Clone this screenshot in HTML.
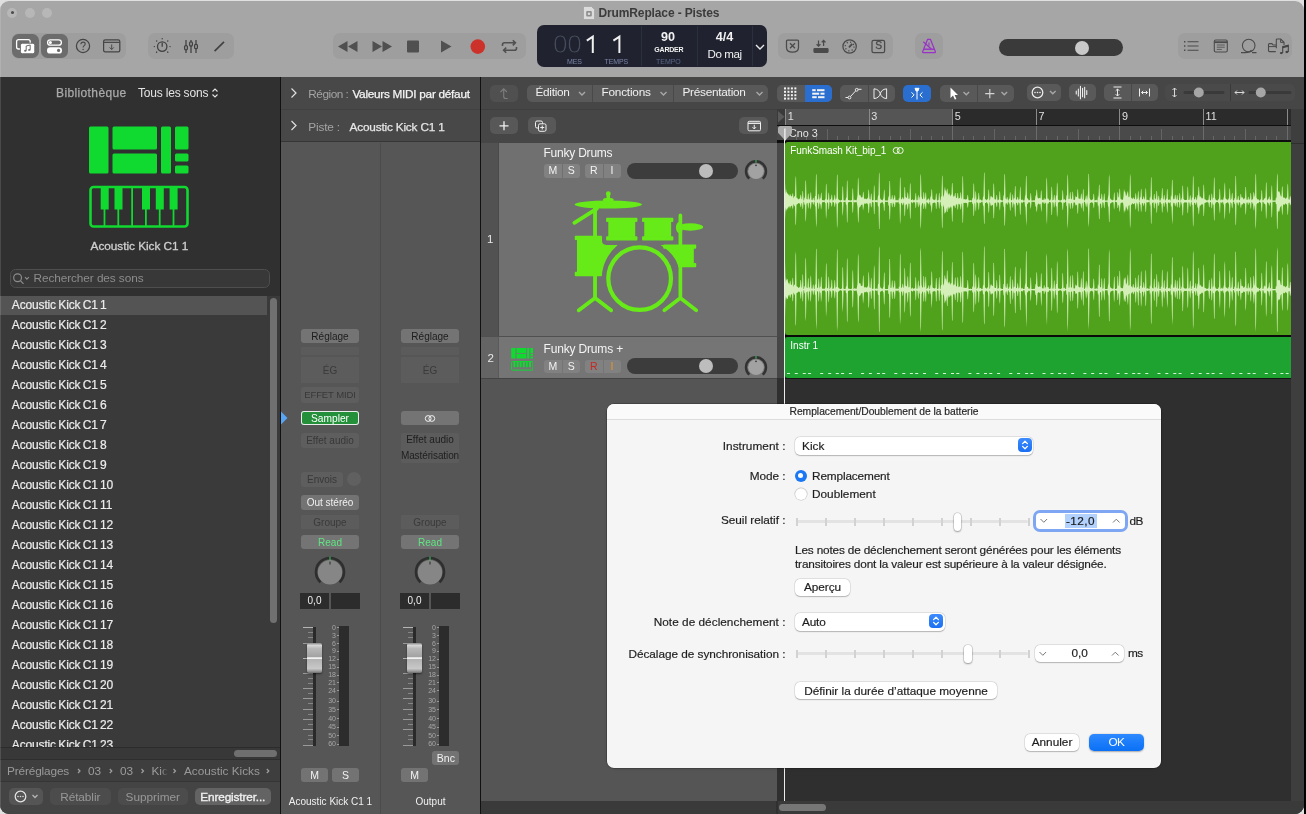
<!DOCTYPE html>
<html><head><meta charset="utf-8">
<style>
*{box-sizing:border-box;margin:0;padding:0}
html,body{width:1306px;height:814px;overflow:hidden;background:#e0e0e0;font-family:"Liberation Sans",sans-serif;font-size:12px;color:#e6e6e6}
.a{position:absolute}
.t{position:absolute;white-space:nowrap;line-height:1}
/* top bar */
#top{left:0;top:0;width:1306px;height:77px;background:#a6a6a6}
.grp{position:absolute;top:33px;height:26px;border-radius:7px;background:#9e9e9e}
.act{position:absolute;top:.9px;height:24.200px;border-radius:6.500px;background:#6c6c6c}
/* library */
#lib{left:0;top:77px;width:280px;height:737px;background:#303030}
#list{left:0;top:219px;width:280px;height:451.700px;background:#3a3a3a;overflow:hidden}
.row{position:absolute;left:0;width:267px;height:19px;padding-left:11.800px;line-height:18.400px;font-size:12px;letter-spacing:-.15px;word-spacing:-.85px;-webkit-text-stroke:.2px #ececec;color:#ececec;white-space:nowrap}
/* inspector */
#insp{left:281px;top:77px;width:199px;height:737px;background:#565656}
.ib{position:absolute;height:15px;border-radius:3px;font-size:10px;text-align:center;line-height:15px;white-space:nowrap}
/* tracks */
#trk{left:481px;top:77px;width:825px;height:737px;background:#2c2c2c}
.tb{position:absolute;top:8.300px;height:17.200px;border-radius:5px;background:#595959}
/* dialog */
#dlg{left:607px;top:404px;width:554px;height:364px;background:#f5f5f5;border-radius:7px;font-size:12.4px;box-shadow:0 0 0 .5px rgba(0,0,0,.35),0 1px 3px rgba(0,0,0,.12)}
#dlg .t{margin-top:1px}
#dlg{-webkit-text-stroke:.18px #1e1e1e;color:#1e1e1e}
</style></head>
<body>
<div class="a" style="left:0;top:1.4px;width:1303.8px;height:812.6px;border-radius:9px;overflow:hidden;will-change:transform"><div class="a" style="left:0;top:-1.4px;width:1306px;height:814px">
<div id="top" class="a">

<!-- traffic lights -->
<div class="a" style="left:7px;top:8px;width:10px;height:10px;border-radius:5px;background:#b7b7b7"></div>
<div class="a" style="left:10.5px;top:11.5px;width:3px;height:3px;border-radius:2px;background:#4c4c4c"></div>
<div class="a" style="left:24.5px;top:8px;width:10px;height:10px;border-radius:5px;background:#b7b7b7"></div>
<div class="a" style="left:42px;top:8px;width:10px;height:10px;border-radius:5px;background:#b7b7b7"></div>
<!-- title -->
<svg class="a" style="left:583px;top:6px" width="12" height="14" viewBox="0 0 12 14"><path d="M0.5 0.5h8l3 3v10h-11z" fill="#dcdcdc" stroke="#9a9a9a" stroke-width=".6"/><rect x="3.2" y="5" width="5.6" height="5.4" rx="1" fill="#8e8e8e"/><circle cx="6" cy="7.7" r="1.3" fill="#dcdcdc"/></svg>
<div class="t" style="left:598.5px;top:7.3px;font-weight:bold;color:#3b3b3b;font-size:12px;letter-spacing:-0.129px">DrumReplace - Pistes</div>
<!-- group1 -->
<div class="grp" style="left:11.5px;width:114.5px">
 <div class="act" style="left:.6px;width:27.2px"></div>
 <div class="act" style="left:29.5px;width:27px"></div>
</div>
<svg class="a" style="left:11px;top:33px" width="116" height="26" viewBox="0 0 116 26" fill="none">
 <!-- media browser -->
 <rect x="5.6" y="6.6" width="13.6" height="9.4" rx="2" stroke="#fff" stroke-width="1.3"/>
 <rect x="9.4" y="10.2" width="14.4" height="10.6" rx="2" fill="#fff" stroke="#6c6c6c" stroke-width="1"/>
 <path d="M15.2 17.6V13l4-1v4.8" stroke="#6c6c6c" stroke-width="1"/><ellipse cx="14.3" cy="17.7" rx="1.2" ry=".95" fill="#6c6c6c"/><ellipse cx="18.3" cy="16.9" rx="1.2" ry=".95" fill="#6c6c6c"/>
 <!-- toggles -->
 <rect x="36.6" y="6.8" width="13.8" height="5.4" rx="2.7" stroke="#fff" stroke-width="1.3"/><circle cx="39.4" cy="9.5" r="1.5" fill="#fff"/>
 <rect x="36" y="14.2" width="15" height="6.4" rx="3.2" fill="#fff"/><circle cx="47.6" cy="17.4" r="1.6" fill="#6c6c6c"/>
 <!-- help -->
 <circle cx="72" cy="13" r="6.6" stroke="#444" stroke-width="1.25"/>
 <path d="M69.9 11.2c0-1.3 1-2.1 2.2-2.1s2.1.8 2.1 1.9c0 1.7-2.1 1.6-2.1 3.4" stroke="#4a4a4a" stroke-width="1.1"/><circle cx="72.1" cy="16.4" r=".75" fill="#4a4a4a"/>
 <!-- window download -->
 <rect x="92.6" y="6.8" width="16.2" height="12" rx="1.6" stroke="#444" stroke-width="1.25"/><path d="M92.6 9.4h16.2" stroke="#4a4a4a" stroke-width="1.2"/>
 <path d="M100.7 11.4v5M98.6 14.4l2.1 2.1 2.1-2.1" stroke="#4a4a4a" stroke-width="1"/>
</svg>
<!-- group2 -->
<div class="grp" style="left:148px;width:86px"></div>
<svg class="a" style="left:148px;top:33px" width="86" height="26" viewBox="0 0 86 26" fill="none" stroke="#424242" stroke-width="1.300">
 <circle cx="14.2" cy="13.6" r="4.7"/><path d="M14.2 9.8v4"/>
 <g stroke-width="1.4" stroke-linecap="round"><path d="M14.2 5.6v.1M8.6 8l.1.1M19.8 8l-.1.1M6.3 13.6h.1M22.1 13.6h-.1M8.6 19.2l.1-.1M19.8 19.2l-.1-.1"/></g>
 <path d="M38 7v13M43 7v13M48 7v13"/>
 <g fill="#a0a0a0"><rect x="36.6" y="12.6" width="2.8" height="4.2" rx="1.2"/><rect x="41.6" y="8.8" width="2.8" height="4.2" rx="1.2"/><rect x="46.6" y="11.4" width="2.8" height="4.2" rx="1.2"/></g>
 <path d="M66.6 18.2l9.4-9.4" stroke-width="1.7"/>
</svg>
<!-- transport -->
<div class="grp" style="left:332.5px;width:193.5px"></div>
<svg class="a" style="left:332px;top:33px" width="194" height="26" viewBox="0 0 194 26" fill="#505050">
 <path d="M15.5 8v11l-9.5-5.5zM25.500 8v11l-9.5-5.500z"/>
 <path d="M40.5 8v11l9.500-5.500zM50.500 8v11l9.500-5.500z"/>
 <rect x="75" y="7.6" width="12" height="12" rx="1"/>
 <path d="M109 7.600v12l10.500-6z"/>
 <circle cx="145.800" cy="13.600" r="7.300" fill="#cc3229"/>
 <g fill="none" stroke="#505050" stroke-width="1.600"><path d="M170.5 13v-1.200a2 2 0 0 1 2-2h10.500M180.800 7.200l2.600 2.600-2.600 2.600"/><path d="M184.500 14v1.200a2 2 0 0 1-2 2h-10.500M174.200 19.800l-2.600-2.600 2.600-2.600"/></g>
</svg>
<!-- LCD -->
<div class="a" style="left:537px;top:25px;width:230px;height:42px;border-radius:7px;background:#20232f"></div>
<div class="a" style="left:641px;top:26px;width:1px;height:40px;background:#2c303e"></div>
<div class="a" style="left:696.5px;top:26px;width:1px;height:40px;background:#2c303e"></div>
<div class="a" style="left:752px;top:26px;width:1px;height:40px;background:#2c303e"></div>
<div class="t" id="lcd00" style="left:552.5px;top:32.500px;font-size:25.5px;color:#474c5e;letter-spacing:-.3px;transform:scaleX(1.03);transform-origin:left;-webkit-text-stroke:.9px #20232f">00</div>
<svg class="a" style="left:584px;top:33px" width="40" height="22" viewBox="0 0 40 22" fill="none" stroke="#f0f0f0" stroke-width="2" stroke-linejoin="miter"><path d="M2.800 7.600L8.800 3.700V20M29.400 7.600L35.400 3.700V20"/></svg>
<div class="t" style="left:567px;top:58.200px;color:#7a84a6;font-size:7px;letter-spacing:-0.156px">MES</div>
<div class="t" style="left:604.500px;top:58.200px;color:#7a84a6;font-size:7px;letter-spacing:-0.083px">TEMPS</div>
<div class="t" style="left:661px;top:31.500px;font-size:12.6px;font-weight:bold;color:#f2f2f2">90</div>
<div class="t" style="left:654.300px;top:46.800px;font-weight:bold;color:#f2f2f2;font-size:7px;letter-spacing:-0.206px">GARDER</div>
<div class="t" style="left:656px;top:58.200px;color:#5a6688;font-size:7px;letter-spacing:-0.018px">TEMPO</div>
<div class="t" style="left:715.700px;top:31.500px;font-size:12.6px;font-weight:bold;color:#f2f2f2">4/4</div>
<div class="t" style="left:707.600px;top:48.800px;color:#f2f2f2;font-size:11.6px;letter-spacing:-0.440px">Do maj</div>
<svg class="a" style="left:754px;top:42px" width="12" height="10" viewBox="0 0 12 10"><path d="M2 3l4 4 4-4" fill="none" stroke="#e8e8e8" stroke-width="1.4"/></svg>
<!-- group4 -->
<div class="grp" style="left:777.5px;width:115.5px"></div>
<svg class="a" style="left:777px;top:33px" width="117" height="26" viewBox="0 0 117 26" fill="none" stroke="#4a4a4a" stroke-width="1.250">
 <path d="M10.500 7h10a1 1 0 0 1 1 1v6.500c0 3-2.500 4.700-6 4.700s-6-1.700-6-4.700v-6.500a1 1 0 0 1 1-1z"/><path d="M13 10.200l5 5M18 10.200l-5 5"/>
 <rect x="37" y="15.600" width="14" height="3.800" rx=".8" fill="#4a4a4a"/><path d="M41.500 7.500v5.600M39.600 11.300l1.900 1.900 1.900-1.900M46.600 13.100v-5.600M44.700 9.400l1.900-1.900 1.900 1.900"/>
 <circle cx="72.600" cy="13.500" r="6.700"/><circle cx="72.600" cy="13.500" r="4.400" stroke-dasharray="1.2 2.250"/><path d="M72 14.400l3.200-3.600" stroke-width="1.8"/>
 <rect x="95" y="7.300" width="12.600" height="12.200" rx="1.600"/>
</svg>
<div class="t" style="left:875.300px;top:41.300px;font-size:10.3px;-webkit-text-stroke:.3px #4a4a4a;color:#4a4a4a">S</div>
<!-- group5 metronome -->
<div class="grp" style="left:914.5px;width:28.5px"></div>
<svg class="a" style="left:914px;top:33px" width="30" height="26" viewBox="0 0 30 26" fill="none" stroke="#9a32c8" stroke-width="1.2" stroke-linejoin="round">
 <path d="M13.600 6.300h2.800l5 12.500a.6.600 0 0 1-.6.800h-11.600a.6.600 0 0 1-.6-.8z"/><path d="M10 16.200h10" stroke-width="1.400"/><path d="M9.300 8.800l8 7.200"/><path d="M15 9.500v3.300" stroke-width="1.100"/>
</svg>
<!-- volume -->
<div class="a" style="left:998.5px;top:39.500px;width:124px;height:16.500px;border-radius:8.500px;background:#3a3a3a"></div>
<div class="a" style="left:1075px;top:41px;width:14px;height:14px;border-radius:7px;background:#c9c9c9"></div>
<!-- group6 -->
<div class="grp" style="left:1177.5px;width:114.5px"></div>
<svg class="a" style="left:1177px;top:33px" width="116" height="26" viewBox="0 0 116 26" fill="none" stroke="#4a4a4a" stroke-width="1.1">
 <path d="M10.500 8.800h11M10.500 13h11M10.500 17.200h11"/><g stroke-width="1.6"><path d="M7 8.800h1.400M7 13h1.400M7 17.200h1.400"/></g>
 <rect x="37.300" y="7" width="13" height="12" rx="1.500"/><path d="M37.300 9.200h13" stroke-width="1.800"/><path d="M39.800 12h8M39.800 14.200h8M39.800 16.400h5" stroke-width=".8"/>
 <circle cx="71.700" cy="12.600" r="6.300"/><path d="M64 19.600h4.500c3 0 5-1 6-2.500M75 19.600h4.500"/>
 <path d="M98.800 18.600h-6.300a1 1 0 0 1-1-1v-6a1 1 0 0 1 1-1h2.400l1.200 1.400h3" stroke-width="1.100"/><path d="M91.500 13.600h7.500" stroke-width="1"/>
<path d="M99.300 15.300v-8.500a.8.800 0 0 1 .8-.8h3.600l3.300 3.300v3" stroke-width="1.100"/><path d="M103.600 6.200v3.200h3.200" stroke-width="1"/>
<g stroke="#9e9e9e" stroke-width="2.600" fill="#9e9e9e"><path d="M105.700 20v-6.300l5.600-1.400v6.600" fill="none"/><ellipse cx="104.200" cy="20.100" rx="1.700" ry="1.300"/><ellipse cx="109.800" cy="19" rx="1.700" ry="1.300"/></g>
<g stroke="#444" fill="#444"><path d="M105.700 20v-6.300l5.600-1.400v6.600" fill="none" stroke-width="1.100"/><path d="M105.700 14.300l5.600-1.400" stroke-width="1.900"/><ellipse cx="104.300" cy="20.100" rx="1.500" ry="1.150" stroke="none"/><ellipse cx="109.900" cy="19" rx="1.500" ry="1.150" stroke="none"/></g>
</svg>
</div>

<div id="lib" class="a">
<div class="t" style="left:56px;top:10px;color:#a9a9a9;-webkit-text-stroke:.25px #a9a9a9;font-size:12px;letter-spacing:0.379px">Bibliothèque</div>
<div class="t" style="left:138px;top:10px;color:#e4e4e4;font-size:12px;letter-spacing:-0.193px">Tous les sons</div>
<svg class="a" style="left:211px;top:10px" width="8" height="12" viewBox="0 0 8 12"><path d="M1.5 4.500l2.500-2.500 2.500 2.500M1.500 7.500l2.500 2.500 2.500-2.500" fill="none" stroke="#e4e4e4" stroke-width="1.1"/></svg>
<!-- drum machine icon -->
<svg class="a" style="left:88px;top:49px" width="102" height="104" viewBox="0 0 102 104">
 <g fill="#10d930"><rect x="1" y="0.500" width="19.500" height="47" rx="1.500"/><rect x="24.500" y="0.500" width="44.500" height="23" rx="1.500"/><rect x="24.500" y="27.500" width="44.500" height="20" rx="1.500"/><rect x="73" y="0.500" width="10" height="47" rx="1.500"/><rect x="87" y="0.500" width="13.500" height="23" rx="1.500"/><rect x="87" y="27.500" width="13.500" height="8" rx="1.500"/><rect x="87" y="39.500" width="13.500" height="8" rx="1.500"/></g>
 <rect x="2.500" y="61" width="97" height="39.500" rx="3" fill="none" stroke="#10d930" stroke-width="2.600"/>
 <g stroke="#10d930" stroke-width="1.800"><path d="M16.500 61v39M30.300 61v39M44.100 61v39M57.900 61v39M71.700 61v39M85.500 61v39"/></g>
 <g fill="#10d930"><rect x="12.700" y="61" width="8" height="22.500"/><rect x="26.500" y="61" width="8" height="22.500"/><rect x="54" y="61" width="8" height="22.500"/><rect x="67.800" y="61" width="8" height="22.500"/><rect x="81.600" y="61" width="8" height="22.500"/></g>
</svg>
<div class="t" style="left:0;width:279px;text-align:center;top:164px;color:#cfcfcf;-webkit-text-stroke:.3px #cfcfcf;font-size:11.8px;letter-spacing:-0.032px">Acoustic Kick C1 1</div>
<!-- search -->
<div class="a" style="left:10px;top:192.400px;width:260px;height:18.800px;border-radius:5.500px;background:#383838;border:1px solid #4e4e4e"></div>
<svg class="a" style="left:12px;top:195.500px" width="20" height="14" viewBox="0 0 20 14" fill="none" stroke="#8c8c8c" stroke-width="1.200"><circle cx="5.600" cy="5.700" r="3.900"/><path d="M8.400 8.700l3.100 3.200M13 5.200l1.900 1.900 1.900-1.900" /></svg>
<div class="t" style="left:33.500px;top:196.800px;color:#8c8c8c;font-size:11.8px;letter-spacing:-0.079px">Rechercher des sons</div>
<div id="list" class="a">
<div class="row" style="top:0px;background:#545454">Acoustic Kick C1 1</div>
<div class="row" style="top:20px">Acoustic Kick C1 2</div>
<div class="row" style="top:40px">Acoustic Kick C1 3</div>
<div class="row" style="top:60px">Acoustic Kick C1 4</div>
<div class="row" style="top:80px">Acoustic Kick C1 5</div>
<div class="row" style="top:100px">Acoustic Kick C1 6</div>
<div class="row" style="top:120px">Acoustic Kick C1 7</div>
<div class="row" style="top:140px">Acoustic Kick C1 8</div>
<div class="row" style="top:160px">Acoustic Kick C1 9</div>
<div class="row" style="top:180px">Acoustic Kick C1 10</div>
<div class="row" style="top:200px">Acoustic Kick C1 11</div>
<div class="row" style="top:220px">Acoustic Kick C1 12</div>
<div class="row" style="top:240px">Acoustic Kick C1 13</div>
<div class="row" style="top:260px">Acoustic Kick C1 14</div>
<div class="row" style="top:280px">Acoustic Kick C1 15</div>
<div class="row" style="top:300px">Acoustic Kick C1 16</div>
<div class="row" style="top:320px">Acoustic Kick C1 17</div>
<div class="row" style="top:340px">Acoustic Kick C1 18</div>
<div class="row" style="top:360px">Acoustic Kick C1 19</div>
<div class="row" style="top:380px">Acoustic Kick C1 20</div>
<div class="row" style="top:400px">Acoustic Kick C1 21</div>
<div class="row" style="top:420px">Acoustic Kick C1 22</div>
<div class="row" style="top:440px">Acoustic Kick C1 23</div>

<div class="a" style="left:270px;top:2px;width:7px;height:325px;border-radius:3.500px;background:#707070"></div>
</div>
<!-- hscroll -->
<div class="a" style="left:0;top:670.700px;width:280px;height:12px;background:#383838;border-top:1px solid #2c2c2c"></div>
<div class="a" style="left:233.500px;top:673.300px;width:43.700px;height:7.300px;border-radius:4px;background:#6f6f6f"></div>
<!-- breadcrumbs -->
<div class="a" style="left:0;top:682.5px;width:280px;height:22px;background:#3e3e3e;border-top:1px solid #2e2e2e"></div>
<div class="t" style="left:7px;top:689.700px;color:#999;font-size:11.8px;letter-spacing:-0.139px">Préréglages</div>
<div class="t" style="left:88px;top:689.600px;font-size:11.8px;color:#9c9c9c">03</div>
<div class="t" style="left:120px;top:689.600px;font-size:11.8px;color:#9c9c9c">03</div>
<div class="t" style="left:151.500px;top:689.600px;font-size:11.8px;color:#9c9c9c;width:16px;overflow:hidden;-webkit-mask-image:linear-gradient(90deg,#000 60%,transparent)">Kick</div>
<div class="t" style="left:184px;top:689.700px;color:#999;font-size:11.8px;letter-spacing:-0.019px">Acoustic Kicks</div>
<svg class="a" style="left:70px;top:689.300px" width="210" height="10" viewBox="0 0 210 10" fill="none" stroke="#a0a0a0" stroke-width="1.200"><path d="M8 3l2 2-2 2M39.800 3l2 2-2 2M71.500 3l2 2-2 2M103.500 3l2 2-2 2M196.800 3l2 2-2 2"/></svg>
<!-- bottom buttons -->
<div class="a" style="left:0;top:704.5px;width:280px;height:33px;background:#444;border-top:1px solid #353535"></div>
<div class="a" style="left:9px;top:711.300px;width:34px;height:17.500px;border-radius:5px;background:#555"></div>
<svg class="a" style="left:13px;top:712.700px" width="28" height="15" viewBox="0 0 28 15" fill="none" stroke="#e4e4e4" stroke-width="1.250"><circle cx="7.500" cy="7.500" r="5.300"/><g fill="#d8d8d8" stroke="none"><circle cx="5" cy="7.500" r=".8"/><circle cx="7.500" cy="7.500" r=".8"/><circle cx="10" cy="7.500" r=".8"/></g><path d="M19.500 6l2.500 2.500 2.500-2.500" stroke="#b5b5b5"/></svg>
<div class="a" style="left:50px;top:711.300px;width:60.500px;height:17.500px;border-radius:5px;background:#4c4c4c;color:#989898;text-align:center;line-height:18.400px;font-size:11.8px;letter-spacing:-0.070px">Rétablir</div>
<div class="a" style="left:118px;top:711.300px;width:69.500px;height:17.500px;border-radius:5px;background:#4c4c4c;color:#989898;text-align:center;line-height:18.400px;font-size:11.8px;letter-spacing:0.008px">Supprimer</div>
<div class="a" style="left:195px;top:711.300px;width:75.500px;height:17.500px;border-radius:5px;background:#636363;color:#f0f0f0;text-align:center;line-height:18.400px;-webkit-text-stroke:.35px #f0f0f0;font-size:11.8px;letter-spacing:-0.135px">Enregistrer...</div>
</div>
<div class="a" style="left:280px;top:77px;width:1px;height:737px;background:#111"></div>
<div id="insp" class="a">
<div class="a" style="left:0;top:0;width:199px;height:65px;background:#484848;border-bottom:1.5px solid #363636"></div>
<div class="a" style="left:0;top:32px;width:199px;height:1px;background:#414141"></div>
<svg class="a" style="left:8px;top:9.500px" width="10" height="46" viewBox="0 0 10 46" fill="none" stroke="#e0e0e0" stroke-width="1.200"><path d="M2.500 2.500l4.500 4.500-4.500 4.500M2.500 35l4.500 4.500-4.500 4.500"/></svg>
<div class="t" style="left:27.300px;top:12.200px;color:#a4a4a4;font-size:11.8px;letter-spacing:-0.481px">Région :</div>
<div class="t" style="left:71.400px;top:12.200px;-webkit-text-stroke:.25px #f4f4f4;color:#f4f4f4;font-size:11.8px;letter-spacing:-0.280px">Valeurs MIDI par défaut</div>
<div class="t" style="left:27.300px;top:45.200px;color:#a4a4a4;font-size:11.8px;letter-spacing:-0.156px">Piste :</div>
<div class="t" style="left:68.500px;top:45.200px;-webkit-text-stroke:.25px #e6e6e6;color:#e6e6e6;font-size:11.8px;letter-spacing:-0.182px">Acoustic Kick C1 1</div>
<div class="a" style="left:99px;top:66px;width:1px;height:671px;background:#4b4b4b"></div>
<svg class="a" style="left:0;top:334px" width="7" height="14" viewBox="0 0 7 14"><path d="M0 0.500l6.500 6.500-6.500 6.500z" fill="#58a5f5"/></svg>
<div class="ib" style="left:20px;top:252px;width:58px;height:14.500px;line-height:15.800px;background:#747474;color:#1c1c1c;">Réglage</div>
<div class="ib" style="left:20px;top:270px;width:58px;height:8px;line-height:8px;background:#5b5b5b;color:#000;border-radius:1px"></div>
<div class="ib" style="left:20px;top:280px;width:58px;height:26px;line-height:27.200px;background:#5c5c5c;color:#3a3a3a;border-radius:1px">ÉG</div>
<div class="ib" style="left:20px;top:310px;width:58px;height:16px;line-height:16px;background:#5e5e5e;color:#383838;font-size:9.500px;letter-spacing:-.1px">EFFET MIDI</div>
<div class="ib" style="left:20px;top:334.6px;width:58px;height:13.7px;line-height:15px;background:#24913a;color:#fff;box-shadow:inset 0 0 0 1px #ececec;font-size:10.2px">Sampler</div>
<div class="ib" style="left:20px;top:356px;width:58px;height:15px;line-height:15px;background:#5e5e5e;color:#383838;">Effet audio</div>
<div class="ib" style="left:20px;top:395px;width:42px;height:15px;line-height:15px;background:#5e5e5e;color:#383838;">Envois</div>
<div class="a" style="left:66px;top:395.500px;width:13.500px;height:13.500px;border-radius:7px;background:#606060"></div>
<div class="ib" style="left:20px;top:418px;width:58px;height:15px;line-height:15px;background:#737373;color:#f0f0f0;">Out stéréo</div>
<div class="ib" style="left:20px;top:438.200px;width:58px;height:14px;line-height:15.500px;background:#5c5c5c;color:#3a3a3a;border-radius:1px">Groupe</div>
<div class="ib" style="left:20px;top:458px;width:58px;height:14.3px;line-height:16px;background:#747474;color:#5fe682;">Read</div>
<svg class="a" style="left:31px;top:477px" width="36" height="36" viewBox="0 0 36 36"><path d="M8.600 28.300A14 14 0 1 1 27.400 28.300" fill="none" stroke="#2e2e2e" stroke-width="2.600"/><circle cx="18" cy="18.300" r="12.200" fill="#868686"/><path d="M18 2.500v4" stroke="#38c75a" stroke-width="1"/><path d="M18 7.500v3" stroke="#3a3a3a" stroke-width="1.200"/></svg>
<div class="a" style="left:19px;top:516.500px;width:29px;height:15.500px;background:#2c2c2c;color:#f0f0f0;font-size:10px;text-align:center;line-height:15.500px">0,0</div><div class="a" style="left:50px;top:516.500px;width:29px;height:15.500px;background:#2c2c2c"></div><div class="a" style="left:22.0px;top:550.6px;width:10.4px;height:1px;background:#b4b4b4"></div><div class="a" style="left:22.0px;top:565.9px;width:10.4px;height:1px;background:#999"></div><div class="a" style="left:22.0px;top:581.1px;width:10.4px;height:1px;background:#b4b4b4"></div><div class="a" style="left:22.0px;top:596.0px;width:10.4px;height:1px;background:#999"></div><div class="a" style="left:22.0px;top:611.2px;width:10.4px;height:1px;background:#999"></div><div class="a" style="left:22.0px;top:621.6px;width:10.4px;height:1px;background:#999"></div><div class="a" style="left:22.0px;top:632.0px;width:10.4px;height:1px;background:#999"></div><div class="a" style="left:22.0px;top:642.4px;width:10.4px;height:1px;background:#999"></div><div class="a" style="left:22.0px;top:652.7px;width:10.4px;height:1px;background:#999"></div><div class="a" style="left:22.0px;top:668.0px;width:10.4px;height:1px;background:#999"></div><div class="a" style="left:27.2px;top:555.8px;width:5.2px;height:1px;background:#858585"></div><div class="a" style="left:27.2px;top:560.7px;width:5.2px;height:1px;background:#858585"></div><div class="a" style="left:27.2px;top:571.0px;width:5.2px;height:1px;background:#858585"></div><div class="a" style="left:27.2px;top:575.9px;width:5.2px;height:1px;background:#858585"></div><div class="a" style="left:27.2px;top:586.0px;width:5.2px;height:1px;background:#858585"></div><div class="a" style="left:27.2px;top:591.1px;width:5.2px;height:1px;background:#858585"></div><div class="a" style="left:27.2px;top:601.2px;width:5.2px;height:1px;background:#858585"></div><div class="a" style="left:27.2px;top:606.0px;width:5.2px;height:1px;background:#858585"></div><div class="a" style="left:27.2px;top:616.4px;width:5.2px;height:1px;background:#858585"></div><div class="a" style="left:27.2px;top:626.8px;width:5.2px;height:1px;background:#858585"></div><div class="a" style="left:27.2px;top:637.2px;width:5.2px;height:1px;background:#858585"></div><div class="a" style="left:27.2px;top:647.5px;width:5.2px;height:1px;background:#858585"></div><div class="a" style="left:27.2px;top:657.9px;width:5.2px;height:1px;background:#858585"></div><div class="a" style="left:27.2px;top:662.8px;width:5.2px;height:1px;background:#858585"></div><div class="a" style="left:122.0px;top:550.6px;width:10.4px;height:1px;background:#b4b4b4"></div><div class="a" style="left:122.0px;top:565.9px;width:10.4px;height:1px;background:#999"></div><div class="a" style="left:122.0px;top:581.1px;width:10.4px;height:1px;background:#b4b4b4"></div><div class="a" style="left:122.0px;top:596.0px;width:10.4px;height:1px;background:#999"></div><div class="a" style="left:122.0px;top:611.2px;width:10.4px;height:1px;background:#999"></div><div class="a" style="left:122.0px;top:621.6px;width:10.4px;height:1px;background:#999"></div><div class="a" style="left:122.0px;top:632.0px;width:10.4px;height:1px;background:#999"></div><div class="a" style="left:122.0px;top:642.4px;width:10.4px;height:1px;background:#999"></div><div class="a" style="left:122.0px;top:652.7px;width:10.4px;height:1px;background:#999"></div><div class="a" style="left:122.0px;top:668.0px;width:10.4px;height:1px;background:#999"></div><div class="a" style="left:127.2px;top:555.8px;width:5.2px;height:1px;background:#858585"></div><div class="a" style="left:127.2px;top:560.7px;width:5.2px;height:1px;background:#858585"></div><div class="a" style="left:127.2px;top:571.0px;width:5.2px;height:1px;background:#858585"></div><div class="a" style="left:127.2px;top:575.9px;width:5.2px;height:1px;background:#858585"></div><div class="a" style="left:127.2px;top:586.0px;width:5.2px;height:1px;background:#858585"></div><div class="a" style="left:127.2px;top:591.1px;width:5.2px;height:1px;background:#858585"></div><div class="a" style="left:127.2px;top:601.2px;width:5.2px;height:1px;background:#858585"></div><div class="a" style="left:127.2px;top:606.0px;width:5.2px;height:1px;background:#858585"></div><div class="a" style="left:127.2px;top:616.4px;width:5.2px;height:1px;background:#858585"></div><div class="a" style="left:127.2px;top:626.8px;width:5.2px;height:1px;background:#858585"></div><div class="a" style="left:127.2px;top:637.2px;width:5.2px;height:1px;background:#858585"></div><div class="a" style="left:127.2px;top:647.5px;width:5.2px;height:1px;background:#858585"></div><div class="a" style="left:127.2px;top:657.9px;width:5.2px;height:1px;background:#858585"></div><div class="a" style="left:127.2px;top:662.8px;width:5.2px;height:1px;background:#858585"></div><div class="a" style="left:32.4px;top:550.500px;width:2.400px;height:118.500px;background:#2a2a2a"></div><div class="a" style="left:26.3px;top:566.400px;width:14.900px;height:30.100px;border-radius:2px;background:linear-gradient(#8a8a8a 0,#d6d6d6 8%,#b9b9b9 18%,#a2a2a2 46%,#f0f0f0 49%,#f0f0f0 52%,#b4b4b4 55%,#c8c8c8 85%,#9a9a9a 94%,#6e6e6e 100%);box-shadow:0 1px 2px rgba(0,0,0,.5)"></div><div class="a" style="left:58.3px;top:549.200px;width:10.100px;height:120px;background:#2c2c2c"></div><div class="t" style="left:42px;width:13px;text-align:right;top:547.0px;font-size:7px;color:#a6a6a6">0</div><div class="a" style="left:56.3px;top:550.5px;width:1.500px;height:1px;background:#9a9a9a"></div><div class="t" style="left:42px;width:13px;text-align:right;top:555.0px;font-size:7px;color:#a6a6a6">3</div><div class="a" style="left:56.3px;top:558.5px;width:1.500px;height:1px;background:#9a9a9a"></div><div class="t" style="left:42px;width:13px;text-align:right;top:563.0px;font-size:7px;color:#a6a6a6">6</div><div class="a" style="left:56.3px;top:566.5px;width:1.500px;height:1px;background:#9a9a9a"></div><div class="t" style="left:42px;width:13px;text-align:right;top:570.5px;font-size:7px;color:#a6a6a6">9</div><div class="a" style="left:56.3px;top:574px;width:1.500px;height:1px;background:#9a9a9a"></div><div class="t" style="left:42px;width:13px;text-align:right;top:578.5px;font-size:7px;color:#a6a6a6">12</div><div class="a" style="left:56.3px;top:582px;width:1.500px;height:1px;background:#9a9a9a"></div><div class="t" style="left:42px;width:13px;text-align:right;top:586.5px;font-size:7px;color:#a6a6a6">15</div><div class="a" style="left:56.3px;top:590px;width:1.500px;height:1px;background:#9a9a9a"></div><div class="t" style="left:42px;width:13px;text-align:right;top:594.5px;font-size:7px;color:#a6a6a6">18</div><div class="a" style="left:56.3px;top:598px;width:1.500px;height:1px;background:#9a9a9a"></div><div class="t" style="left:42px;width:13px;text-align:right;top:602.0px;font-size:7px;color:#a6a6a6">21</div><div class="a" style="left:56.3px;top:605.5px;width:1.500px;height:1px;background:#9a9a9a"></div><div class="t" style="left:42px;width:13px;text-align:right;top:610.0px;font-size:7px;color:#a6a6a6">24</div><div class="a" style="left:56.3px;top:613.5px;width:1.500px;height:1px;background:#9a9a9a"></div><div class="t" style="left:42px;width:13px;text-align:right;top:620.5px;font-size:7px;color:#a6a6a6">30</div><div class="a" style="left:56.3px;top:624px;width:1.500px;height:1px;background:#9a9a9a"></div><div class="t" style="left:42px;width:13px;text-align:right;top:629.0px;font-size:7px;color:#a6a6a6">35</div><div class="a" style="left:56.3px;top:632.5px;width:1.500px;height:1px;background:#9a9a9a"></div><div class="t" style="left:42px;width:13px;text-align:right;top:638.0px;font-size:7px;color:#a6a6a6">40</div><div class="a" style="left:56.3px;top:641.5px;width:1.500px;height:1px;background:#9a9a9a"></div><div class="t" style="left:42px;width:13px;text-align:right;top:646.5px;font-size:7px;color:#a6a6a6">45</div><div class="a" style="left:56.3px;top:650px;width:1.500px;height:1px;background:#9a9a9a"></div><div class="t" style="left:42px;width:13px;text-align:right;top:655.0px;font-size:7px;color:#a6a6a6">50</div><div class="a" style="left:56.3px;top:658.5px;width:1.500px;height:1px;background:#9a9a9a"></div><div class="t" style="left:42px;width:13px;text-align:right;top:663.5px;font-size:7px;color:#a6a6a6">60</div><div class="a" style="left:56.3px;top:667px;width:1.500px;height:1px;background:#9a9a9a"></div>
<div class="ib" style="left:120px;top:252px;width:58px;height:14.500px;line-height:15.800px;background:#747474;color:#1c1c1c;">Réglage</div>
<div class="ib" style="left:120px;top:270px;width:58px;height:8px;line-height:8px;background:#5b5b5b;color:#000;border-radius:1px"></div>
<div class="ib" style="left:120px;top:280px;width:58px;height:26px;line-height:27.200px;background:#5c5c5c;color:#3a3a3a;border-radius:1px">ÉG</div>
<div class="ib" style="left:120px;top:334.4px;width:58px;height:14px;line-height:14px;background:#747474;color:#fff;"></div>
<svg class="a" style="left:143px;top:337px" width="12" height="9" viewBox="0 0 12 9" fill="none" stroke="#f2f2f2" stroke-width="1"><circle cx="4.200" cy="4.500" r="2.900"/><circle cx="7.800" cy="4.500" r="2.900"/></svg><div class="ib" style="left:120px;top:356px;width:58px;height:30.500px;line-height:30px;background:#5c5c5c;color:#000;border-radius:2px"></div>
<div class="t" style="left:116px;width:66px;text-align:center;top:358.500px;font-size:10px;color:#1e1e1e">Effet audio</div><div class="t" style="left:116px;width:66px;text-align:center;top:374.500px;font-size:10px;color:#1e1e1e;letter-spacing:-.1px">Mastérisation</div><div class="ib" style="left:120px;top:438.200px;width:58px;height:14px;line-height:15.500px;background:#5c5c5c;color:#3a3a3a;border-radius:1px">Groupe</div>
<div class="ib" style="left:120px;top:458px;width:58px;height:14.3px;line-height:16px;background:#747474;color:#5fe682;">Read</div>
<svg class="a" style="left:131px;top:477px" width="36" height="36" viewBox="0 0 36 36"><path d="M8.600 28.300A14 14 0 1 1 27.400 28.300" fill="none" stroke="#2e2e2e" stroke-width="2.600"/><circle cx="18" cy="18.300" r="12.200" fill="#868686"/><path d="M18 2.500v4" stroke="#38c75a" stroke-width="1"/><path d="M18 7.500v3" stroke="#3a3a3a" stroke-width="1.200"/></svg>
<div class="a" style="left:119px;top:516.500px;width:29px;height:15.500px;background:#2c2c2c;color:#f0f0f0;font-size:10px;text-align:center;line-height:15.500px">0,0</div><div class="a" style="left:150px;top:516.500px;width:29px;height:15.500px;background:#2c2c2c"></div><div class="a" style="left:132.4px;top:550.500px;width:2.400px;height:118.500px;background:#2a2a2a"></div><div class="a" style="left:126.3px;top:566.400px;width:14.900px;height:30.100px;border-radius:2px;background:linear-gradient(#8a8a8a 0,#d6d6d6 8%,#b9b9b9 18%,#a2a2a2 46%,#f0f0f0 49%,#f0f0f0 52%,#b4b4b4 55%,#c8c8c8 85%,#9a9a9a 94%,#6e6e6e 100%);box-shadow:0 1px 2px rgba(0,0,0,.5)"></div><div class="a" style="left:158.3px;top:549.200px;width:10.100px;height:120px;background:#2c2c2c"></div><div class="t" style="left:142px;width:13px;text-align:right;top:547.0px;font-size:7px;color:#a6a6a6">0</div><div class="a" style="left:156.3px;top:550.5px;width:1.500px;height:1px;background:#9a9a9a"></div><div class="t" style="left:142px;width:13px;text-align:right;top:555.0px;font-size:7px;color:#a6a6a6">3</div><div class="a" style="left:156.3px;top:558.5px;width:1.500px;height:1px;background:#9a9a9a"></div><div class="t" style="left:142px;width:13px;text-align:right;top:563.0px;font-size:7px;color:#a6a6a6">6</div><div class="a" style="left:156.3px;top:566.5px;width:1.500px;height:1px;background:#9a9a9a"></div><div class="t" style="left:142px;width:13px;text-align:right;top:570.5px;font-size:7px;color:#a6a6a6">9</div><div class="a" style="left:156.3px;top:574px;width:1.500px;height:1px;background:#9a9a9a"></div><div class="t" style="left:142px;width:13px;text-align:right;top:578.5px;font-size:7px;color:#a6a6a6">12</div><div class="a" style="left:156.3px;top:582px;width:1.500px;height:1px;background:#9a9a9a"></div><div class="t" style="left:142px;width:13px;text-align:right;top:586.5px;font-size:7px;color:#a6a6a6">15</div><div class="a" style="left:156.3px;top:590px;width:1.500px;height:1px;background:#9a9a9a"></div><div class="t" style="left:142px;width:13px;text-align:right;top:594.5px;font-size:7px;color:#a6a6a6">18</div><div class="a" style="left:156.3px;top:598px;width:1.500px;height:1px;background:#9a9a9a"></div><div class="t" style="left:142px;width:13px;text-align:right;top:602.0px;font-size:7px;color:#a6a6a6">21</div><div class="a" style="left:156.3px;top:605.5px;width:1.500px;height:1px;background:#9a9a9a"></div><div class="t" style="left:142px;width:13px;text-align:right;top:610.0px;font-size:7px;color:#a6a6a6">24</div><div class="a" style="left:156.3px;top:613.5px;width:1.500px;height:1px;background:#9a9a9a"></div><div class="t" style="left:142px;width:13px;text-align:right;top:620.5px;font-size:7px;color:#a6a6a6">30</div><div class="a" style="left:156.3px;top:624px;width:1.500px;height:1px;background:#9a9a9a"></div><div class="t" style="left:142px;width:13px;text-align:right;top:629.0px;font-size:7px;color:#a6a6a6">35</div><div class="a" style="left:156.3px;top:632.5px;width:1.500px;height:1px;background:#9a9a9a"></div><div class="t" style="left:142px;width:13px;text-align:right;top:638.0px;font-size:7px;color:#a6a6a6">40</div><div class="a" style="left:156.3px;top:641.5px;width:1.500px;height:1px;background:#9a9a9a"></div><div class="t" style="left:142px;width:13px;text-align:right;top:646.5px;font-size:7px;color:#a6a6a6">45</div><div class="a" style="left:156.3px;top:650px;width:1.500px;height:1px;background:#9a9a9a"></div><div class="t" style="left:142px;width:13px;text-align:right;top:655.0px;font-size:7px;color:#a6a6a6">50</div><div class="a" style="left:156.3px;top:658.5px;width:1.500px;height:1px;background:#9a9a9a"></div><div class="t" style="left:142px;width:13px;text-align:right;top:663.5px;font-size:7px;color:#a6a6a6">60</div><div class="a" style="left:156.3px;top:667px;width:1.500px;height:1px;background:#9a9a9a"></div>
<div class="ib" style="left:151.400px;top:674.300px;width:27px;height:13.600px;line-height:14.400px;background:#737373;color:#f2f2f2;font-size:10.500px">Bnc</div>
<div class="ib" style="left:20px;top:691.500px;width:27px;height:14px;line-height:14.500px;background:#737373;color:#f2f2f2;font-size:10.500px">M</div>
<div class="ib" style="left:51px;top:691.500px;width:27px;height:14px;line-height:14.500px;background:#737373;color:#f2f2f2;font-size:10.500px">S</div>
<div class="ib" style="left:120px;top:691.500px;width:27px;height:14px;line-height:14.500px;background:#737373;color:#f2f2f2;font-size:10.500px">M</div>
<div class="t" style="left:0;width:99px;text-align:center;top:720.100px;font-size:10px;color:#f0f0f0">Acoustic Kick C1 1</div>
<div class="t" style="left:100px;width:99px;text-align:center;top:720.100px;font-size:10px;color:#f0f0f0">Output</div>
</div>
<div class="a" style="left:480px;top:77px;width:1px;height:737px;background:#111"></div>
<div id="trk" class="a">
<!-- toolbar row -->
<div class="a" style="left:0;top:0;width:825px;height:33px;background:#464646"></div>
<div class="a" style="left:0;top:32.500px;width:296px;height:33.500px;background:#464646;border-top:1px solid #3e3e3e"></div>
<div class="tb" style="left:9px;width:28px;background:#505050"></div>
<svg class="a" style="left:17px;top:10px" width="12" height="13" viewBox="0 0 12 13" fill="none" stroke="#7e7e7e" stroke-width="1.100"><path d="M2.500 5l3.200-3.200 3.200 3.200M5.700 2v7.500c0 1.200.8 2 2 2h2"/></svg>
<div class="tb" style="left:46px;width:241px;"></div>
<div class="a" style="left:111px;top:8.300px;width:1px;height:17.200px;background:#494949"></div>
<div class="a" style="left:192px;top:8.300px;width:1px;height:17.200px;background:#494949"></div>
<div class="t" style="left:54.500px;top:10.200px;color:#f0f0f0;font-size:11.8px;letter-spacing:-0.283px">Édition</div>
<div class="t" style="left:120.500px;top:10.200px;color:#f0f0f0;font-size:11.8px;letter-spacing:-0.218px">Fonctions</div>
<div class="t" style="left:201.500px;top:10.200px;color:#f0f0f0;font-size:11.8px;letter-spacing:-0.263px">Présentation</div>
<svg class="a" style="left:96px;top:13px" width="190" height="8" viewBox="0 0 190 8" fill="none" stroke="#a8a8a8" stroke-width="1.350"><path d="M2 2l3 3 3-3M83.500 2l3 3 3-3M179.500 2l3 3 3-3"/></svg>
<div class="tb" style="left:296px;width:55px;"></div>
<div class="tb" style="left:323.500px;width:27.500px;background:#2a6fd0;border-radius:0 5px 5px 0"></div>
<svg class="a" style="left:297px;top:7px" width="55" height="19" viewBox="0 0 55 19" fill="#f2f2f2"><g><rect x="6.00" y="3.40" width="2" height="2"/><rect x="6.00" y="6.80" width="2" height="2"/><rect x="6.00" y="10.20" width="2" height="2"/><rect x="6.00" y="13.60" width="2" height="2"/><rect x="9.45" y="3.40" width="2" height="2"/><rect x="9.45" y="6.80" width="2" height="2"/><rect x="9.45" y="10.20" width="2" height="2"/><rect x="9.45" y="13.60" width="2" height="2"/><rect x="12.90" y="3.40" width="2" height="2"/><rect x="12.90" y="6.80" width="2" height="2"/><rect x="12.90" y="10.20" width="2" height="2"/><rect x="12.90" y="13.60" width="2" height="2"/><rect x="16.35" y="3.40" width="2" height="2"/><rect x="16.35" y="6.80" width="2" height="2"/><rect x="16.35" y="10.20" width="2" height="2"/><rect x="16.35" y="13.60" width="2" height="2"/></g><rect x="34.200" y="5.200" width="3.500" height="2"/><rect x="39" y="5.200" width="7.500" height="2"/><rect x="34.200" y="8.700" width="7" height="2"/><rect x="42.500" y="8.700" width="4" height="2"/><rect x="34.200" y="12.200" width="4.500" height="2"/><rect x="40" y="12.200" width="6.500" height="2"/></svg>
<div class="tb" style="left:359px;width:55px;"></div>
<div class="a" style="left:386.500px;top:8.300px;width:1px;height:17.200px;background:#494949"></div>
<svg class="a" style="left:359px;top:7px" width="55" height="19" viewBox="0 0 55 19" fill="none" stroke="#ececec" stroke-width="1"><path d="M5.500 13.500h3M10.500 12.500l5.500-6M17.800 5.300h3.700"/><circle cx="9.500" cy="13.500" r="1.400" fill="#595959"/><circle cx="16.700" cy="5.800" r="1.400" fill="#595959"/><path d="M34 4.800v9.800c4-.3 5.500-2.500 6.300-4.900 .8 2.400 2.300 4.600 6.300 4.900v-9.800c-4 .3-5.500 2.500-6.300 4.900-.8-2.400-2.300-4.600-6.300-4.900z" stroke-linejoin="round"/></svg>
<div class="tb" style="left:421.700px;width:28.500px;background:#2a6fd0"></div>
<svg class="a" style="left:419px;top:7px" width="34" height="19" viewBox="0 0 34 19" fill="none" stroke="#fff" stroke-width="1"><path d="M17 7v8.500"/><path d="M15 4.300h4l-1.100 2.700h-1.800z" fill="#fff"/><path d="M11.500 8.300l2.600 2.600-2.600 2.600M22.500 8.300l-2.600 2.600 2.600 2.600"/></svg>
<div class="tb" style="left:459px;width:74px;"></div>
<div class="a" style="left:495.500px;top:8.300px;width:1px;height:17.200px;background:#494949"></div>
<svg class="a" style="left:459px;top:7px" width="74" height="19" viewBox="0 0 74 19" fill="none" stroke="#a0a0a0" stroke-width="1"><path d="M10.500 3.500v10.500l2.500-2.400 1.800 4 1.600-.7-1.800-4h3.400z" fill="#fff" stroke="none"/><path d="M23.500 8l2.800 2.800 2.800-2.800M61.500 8l2.800 2.800 2.800-2.800" stroke="#a8a8a8" stroke-width="1.350"/><path d="M49.800 5v9.200M45.200 9.600h9.200" stroke="#d4d4d4" stroke-width="1.150"/></svg>
<div class="tb" style="top:7.600px;left:546px;width:33.5px;"></div>
<svg class="a" style="left:546px;top:6.500px" width="34" height="19" viewBox="0 0 34 19" fill="none" stroke="#ececec" stroke-width="1"><circle cx="10.500" cy="9.500" r="5.300" stroke-width="1.250"/><g fill="#ececec" stroke="none"><circle cx="8" cy="9.500" r=".8"/><circle cx="10.500" cy="9.500" r=".8"/><circle cx="13" cy="9.500" r=".8"/></g><path d="M23 8l2.800 2.800 2.800-2.800" stroke="#a8a8a8" stroke-width="1.350"/></svg>
<div class="tb" style="top:7.600px;left:588px;width:27px;"></div>
<svg class="a" style="left:588px;top:6.500px" width="27" height="19" viewBox="0 0 27 19" fill="none" stroke="#ececec" stroke-width="1.100" stroke-linecap="round"><path d="M7.250 8.100v2.800M9.350 6v7M11.450 3.300v12.400M13.550 5.300v8.400M15.650 4.200v10.600M17.750 7.600v3.800"/></svg>
<div class="tb" style="top:7.600px;left:623px;width:54px;"></div>
<div class="a" style="left:649.500px;top:7.600px;width:1px;height:17.200px;background:#494949"></div>
<svg class="a" style="left:623px;top:6.500px" width="54" height="19" viewBox="0 0 54 19" fill="none" stroke="#ececec" stroke-width="1"><path d="M9.500 4h8M9.500 15h8M13.500 6v7M11.700 7.800l1.800-1.800 1.800 1.800M11.700 11.200l1.800 1.800 1.800-1.800"/><path d="M35.500 5.500v8M45.500 5.500v8M37.500 9.500h6M39.200 7.800l-1.700 1.700 1.700 1.700M41.800 7.800l1.700 1.700-1.700 1.700"/></svg>
<div class="tb" style="top:7.600px;left:684px;width:130px;background:#4a4a4a"></div>
<div class="a" style="left:748.500px;top:7.600px;width:1px;height:17.200px;background:#3a3a3a"></div>
<svg class="a" style="left:684px;top:6.500px" width="130" height="19" viewBox="0 0 130 19" fill="none" stroke="#d8d8d8" stroke-width="1"><path d="M9.500 5v9M7.500 7l2-2 2 2M7.500 12l2 2 2-2"/><path d="M20 9.500h38M85 9.500h40" stroke="#3a3a3a" stroke-width="3" stroke-linecap="round"/><circle cx="33.800" cy="9.500" r="5" fill="#a6a6a6" stroke="none"/><circle cx="95.800" cy="9.500" r="5" fill="#a6a6a6" stroke="none"/><path d="M70 9.500h9M72 7.500l-2 2 2 2M77 7.500l2 2-2 2"/></svg>
<!-- 2nd row buttons -->
<div class="tb" style="left:9px;top:40px;width:28px;height:17.200px;background:#585858"></div>
<div class="tb" style="left:46.700px;top:40px;width:28.300px;height:17.200px;background:#585858"></div>
<div class="tb" style="left:258.300px;top:40px;width:28.500px;height:17.200px;background:#585858"></div>
<svg class="a" style="left:9px;top:40px" width="280" height="18" viewBox="0 0 280 18" fill="none" stroke="#f0f0f0" stroke-width="1"><path d="M14 4.300v9M9.500 8.800h9" stroke-width="1.300"/><rect x="45.500" y="4" width="7" height="7" rx="1.500"/><rect x="48.500" y="6.800" width="7.500" height="7.500" rx="1.500" fill="#585858"/><path d="M52.250 8.500v4M50.250 10.500h4"/><rect x="258" y="4.300" width="12.500" height="9.500" rx="1.200"/><path d="M258 6.300h12.500" stroke-width="1.300"/><path d="M264.250 7.800v4M262.500 10.200l1.750 1.750 1.750-1.750"/></svg>
<!-- ruler -->
<div class="a" style="left:296px;top:32.5px;width:514px;height:34px;background:#0e0e0e"></div>
<div class="a" style="left:296px;top:32.5px;width:514px;height:15.7px;background:#2b2b2b;overflow:hidden">
 <div class="a" style="left:8.1px;top:0;width:167.1px;height:16px;background:#555"></div>
 <div class="a" style="left:0;top:0;width:8.1px;height:16px;background:#3a3a3a"></div>
 <div class="a" style="left:8.1px;top:0;width:1px;height:16px;background:#8a8a8a"></div><div class="t" style="left:10.7px;top:1.7px;font-size:10.8px;color:#e0e0e0">1</div><div class="a" style="left:91.7px;top:0;width:1px;height:16px;background:#8a8a8a"></div><div class="t" style="left:94.3px;top:1.7px;font-size:10.8px;color:#e0e0e0">3</div><div class="a" style="left:175.2px;top:0;width:1px;height:16px;background:#8a8a8a"></div><div class="t" style="left:177.8px;top:1.7px;font-size:10.8px;color:#e0e0e0">5</div><div class="a" style="left:258.8px;top:0;width:1px;height:16px;background:#8a8a8a"></div><div class="t" style="left:261.4px;top:1.7px;font-size:10.8px;color:#e0e0e0">7</div><div class="a" style="left:342.3px;top:0;width:1px;height:16px;background:#8a8a8a"></div><div class="t" style="left:344.9px;top:1.7px;font-size:10.8px;color:#e0e0e0">9</div><div class="a" style="left:425.9px;top:0;width:1px;height:16px;background:#8a8a8a"></div><div class="t" style="left:428.5px;top:1.7px;font-size:10.8px;color:#e0e0e0">11</div><div class="a" style="left:509.5px;top:0;width:1px;height:16px;background:#8a8a8a"></div><div class="a" style="left:513.5px;top:3.5px;width:1px;height:2.500px;background:#d0d0d0"></div>
 <svg class="a" style="left:0.5px;top:2px" width="8" height="12" viewBox="0 0 8 12"><path d="M0 0l6.500 5.800-6.500 5.800z" fill="#5a5a5a"/></svg>
</div>
<div class="a" style="left:296px;top:49.700px;width:514px;height:14.200px;background:#4a4a4a;overflow:hidden"><div class="a" style="left:8.1px;top:0;width:1px;height:15px;background:#6c6c6c"></div><div class="a" style="left:18.5px;top:9.5px;width:1px;height:5px;background:#666"></div><div class="a" style="left:29.0px;top:9.5px;width:1px;height:5px;background:#666"></div><div class="a" style="left:39.4px;top:9.5px;width:1px;height:5px;background:#666"></div><div class="a" style="left:49.9px;top:3px;width:1px;height:12px;background:#646464"></div><div class="a" style="left:60.3px;top:9.5px;width:1px;height:5px;background:#666"></div><div class="a" style="left:70.8px;top:9.5px;width:1px;height:5px;background:#666"></div><div class="a" style="left:81.2px;top:9.5px;width:1px;height:5px;background:#666"></div><div class="a" style="left:91.7px;top:0;width:1px;height:15px;background:#6c6c6c"></div><div class="a" style="left:102.1px;top:9.5px;width:1px;height:5px;background:#666"></div><div class="a" style="left:112.5px;top:9.5px;width:1px;height:5px;background:#666"></div><div class="a" style="left:123.0px;top:9.5px;width:1px;height:5px;background:#666"></div><div class="a" style="left:133.4px;top:3px;width:1px;height:12px;background:#646464"></div><div class="a" style="left:143.9px;top:9.5px;width:1px;height:5px;background:#666"></div><div class="a" style="left:154.3px;top:9.5px;width:1px;height:5px;background:#666"></div><div class="a" style="left:164.8px;top:9.5px;width:1px;height:5px;background:#666"></div><div class="a" style="left:175.2px;top:0;width:1px;height:15px;background:#6c6c6c"></div><div class="a" style="left:185.7px;top:9.5px;width:1px;height:5px;background:#666"></div><div class="a" style="left:196.1px;top:9.5px;width:1px;height:5px;background:#666"></div><div class="a" style="left:206.6px;top:9.5px;width:1px;height:5px;background:#666"></div><div class="a" style="left:217.0px;top:3px;width:1px;height:12px;background:#646464"></div><div class="a" style="left:227.4px;top:9.5px;width:1px;height:5px;background:#666"></div><div class="a" style="left:237.9px;top:9.5px;width:1px;height:5px;background:#666"></div><div class="a" style="left:248.3px;top:9.5px;width:1px;height:5px;background:#666"></div><div class="a" style="left:258.8px;top:0;width:1px;height:15px;background:#6c6c6c"></div><div class="a" style="left:269.2px;top:9.5px;width:1px;height:5px;background:#666"></div><div class="a" style="left:279.7px;top:9.5px;width:1px;height:5px;background:#666"></div><div class="a" style="left:290.1px;top:9.5px;width:1px;height:5px;background:#666"></div><div class="a" style="left:300.6px;top:3px;width:1px;height:12px;background:#646464"></div><div class="a" style="left:311.0px;top:9.5px;width:1px;height:5px;background:#666"></div><div class="a" style="left:321.5px;top:9.5px;width:1px;height:5px;background:#666"></div><div class="a" style="left:331.9px;top:9.5px;width:1px;height:5px;background:#666"></div><div class="a" style="left:342.3px;top:0;width:1px;height:15px;background:#6c6c6c"></div><div class="a" style="left:352.8px;top:9.5px;width:1px;height:5px;background:#666"></div><div class="a" style="left:363.2px;top:9.5px;width:1px;height:5px;background:#666"></div><div class="a" style="left:373.7px;top:9.5px;width:1px;height:5px;background:#666"></div><div class="a" style="left:384.1px;top:3px;width:1px;height:12px;background:#646464"></div><div class="a" style="left:394.6px;top:9.5px;width:1px;height:5px;background:#666"></div><div class="a" style="left:405.0px;top:9.5px;width:1px;height:5px;background:#666"></div><div class="a" style="left:415.5px;top:9.5px;width:1px;height:5px;background:#666"></div><div class="a" style="left:425.9px;top:0;width:1px;height:15px;background:#6c6c6c"></div><div class="a" style="left:436.3px;top:9.5px;width:1px;height:5px;background:#666"></div><div class="a" style="left:446.8px;top:9.5px;width:1px;height:5px;background:#666"></div><div class="a" style="left:457.2px;top:9.5px;width:1px;height:5px;background:#666"></div><div class="a" style="left:467.7px;top:3px;width:1px;height:12px;background:#646464"></div><div class="a" style="left:478.1px;top:9.5px;width:1px;height:5px;background:#666"></div><div class="a" style="left:488.6px;top:9.5px;width:1px;height:5px;background:#666"></div><div class="a" style="left:499.0px;top:9.5px;width:1px;height:5px;background:#666"></div><div class="a" style="left:509.5px;top:0;width:1px;height:15px;background:#6c6c6c"></div><div class="a" style="left:519.9px;top:9.5px;width:1px;height:5px;background:#666"></div><div class="a" style="left:530.4px;top:9.5px;width:1px;height:5px;background:#666"></div><div class="a" style="left:540.8px;top:9.5px;width:1px;height:5px;background:#666"></div>
 <div class="t" style="left:12px;top:2.200px;font-size:10.800px;color:#e2e2e2">Cno 3</div>
</div>
<!-- track headers -->
<div class="a" style="left:0;top:66px;width:296px;height:194px;background:#707070"></div>
<div class="a" style="left:0;top:66px;width:18px;height:194px;background:#525252;border-right:1px solid #4a4a4a"></div>
<div class="a" style="left:0;top:259.300px;width:296px;height:1.200px;background:#505050"></div>
<div class="a" style="left:0;top:260.500px;width:296px;height:41px;background:#757575"></div>
<div class="a" style="left:0;top:260.500px;width:18px;height:41px;background:#646464;border-right:1px solid #5a5a5a"></div>
<div class="a" style="left:0;top:301.200px;width:296px;height:1px;background:#444"></div>
<div class="a" style="left:0;top:302px;width:296px;height:435px;background:#555"></div>
<div class="t" style="left:6px;top:157px;font-size:11.500px;color:#e8e8e8">1</div>
<div class="t" style="left:6.500px;top:276.700px;font-size:11.500px;color:#e8e8e8">2</div>
<div class="t" style="left:62.500px;top:70.100px;color:#f4f4f4;font-size:12px;letter-spacing:-0.222px">Funky Drums</div>
<div class="t" style="left:62.500px;top:266.100px;color:#f4f4f4;font-size:12px;letter-spacing:-0.168px">Funky Drums +</div>
<div class="a" style="left:63px;top:87.5px;width:17.5px;height:13.500px;border-radius:3px 0 0 3px;background:#818181;color:#f2f2f2;font-size:10.500px;text-align:center;line-height:13.500px">M</div><div class="a" style="left:81.5px;top:87.5px;width:17.5px;height:13.500px;border-radius:0 3px 3px 0;background:#818181;color:#f2f2f2;font-size:10.500px;text-align:center;line-height:13.500px">S</div><div class="a" style="left:104px;top:87.5px;width:17.5px;height:13.500px;border-radius:3px 0 0 3px;background:#818181;color:#f2f2f2;font-size:10.500px;text-align:center;line-height:13.500px">R</div><div class="a" style="left:122.5px;top:87.5px;width:17px;height:13.500px;border-radius:0 3px 3px 0;background:#818181;color:#f2f2f2;font-size:10.500px;text-align:center;line-height:13.500px">I</div><div class="a" style="left:146px;top:86.0px;width:111px;height:16px;border-radius:8px;background:#3c3c3c"></div><div class="a" style="left:218px;top:87.0px;width:14px;height:14px;border-radius:7px;background:#bdbdbd"></div><svg class="a" style="left:263px;top:82.5px" width="24" height="24" viewBox="0 0 24 24"><path d="M5.300 19.700A10 10 0 1 1 18.700 19.700" fill="none" stroke="#323232" stroke-width="2.400"/><circle cx="12" cy="12.300" r="7.800" fill="#a2a2a2"/><path d="M12 1v2.500" stroke="#38c75a" stroke-width="1"/><circle cx="12" cy="6.300" r=".9" fill="#3a3a3a"/></svg><div class="a" style="left:63px;top:283px;width:17.5px;height:13.500px;border-radius:3px 0 0 3px;background:#818181;color:#f2f2f2;font-size:10.500px;text-align:center;line-height:13.500px">M</div><div class="a" style="left:81.5px;top:283px;width:17.5px;height:13.500px;border-radius:0 3px 3px 0;background:#818181;color:#f2f2f2;font-size:10.500px;text-align:center;line-height:13.500px">S</div><div class="a" style="left:104px;top:283px;width:17.5px;height:13.500px;border-radius:3px 0 0 3px;background:#818181;color:#c8281e;font-size:10.500px;text-align:center;line-height:13.500px">R</div><div class="a" style="left:122.5px;top:283px;width:17px;height:13.500px;border-radius:0 3px 3px 0;background:#818181;color:#e8952a;font-size:10.500px;text-align:center;line-height:13.500px">I</div><div class="a" style="left:146px;top:281.5px;width:111px;height:16px;border-radius:8px;background:#3c3c3c"></div><div class="a" style="left:218px;top:282.5px;width:14px;height:14px;border-radius:7px;background:#bdbdbd"></div><svg class="a" style="left:263px;top:278px" width="24" height="24" viewBox="0 0 24 24"><path d="M5.300 19.700A10 10 0 1 1 18.700 19.700" fill="none" stroke="#323232" stroke-width="2.400"/><circle cx="12" cy="12.300" r="7.800" fill="#a2a2a2"/><path d="M12 1v2.500" stroke="#38c75a" stroke-width="1"/><circle cx="12" cy="6.300" r=".9" fill="#3a3a3a"/></svg>
<!-- drum kit -->
<svg class="a" style="left:79px;top:103px" width="160" height="150" viewBox="0 0 868 813.750">
<g fill="#66ea18" stroke="#66ea18" stroke-linecap="round">
<ellipse cx="262" cy="133" rx="183" ry="22" stroke="none"/><ellipse cx="262" cy="108" rx="30" ry="12" stroke="none"/><circle cx="262" cy="74" r="13" stroke="none"/><path d="M262 76v36" stroke-width="19" fill="none"/>
<path d="M78 232L200 155" stroke-width="21" fill="none"/>
<path d="M190 150V312M190 515V640M190 640L102 707M190 640L277 707" stroke-width="21" fill="none"/>
<rect x="250" y="205" width="170" height="23" rx="5" stroke="none"/><rect x="262" y="215" width="146" height="100" stroke="none"/><rect x="250" y="305" width="170" height="23" rx="5" stroke="none"/>
<rect x="445" y="205" width="170" height="23" rx="5" stroke="none"/><rect x="457" y="215" width="146" height="100" stroke="none"/><rect x="445" y="305" width="170" height="23" rx="5" stroke="none"/>
<path d="M653 192V640M653 640L566 707M653 640L739 707" stroke-width="20" fill="none"/>
<ellipse cx="707" cy="255" rx="70" ry="20" stroke="none"/><ellipse cx="648" cy="258" rx="19" ry="31" stroke="none"/>
<rect x="80" y="303" width="148" height="23" rx="5" stroke="none"/><rect x="80" y="498" width="148" height="24" rx="5" stroke="none"/>
<path d="M92 315H228V334Q231 351 250 352H313Q243 412 228 505V510H92Z" stroke="none"/>
<rect x="640" y="450" width="99" height="23" rx="5" stroke="none"/><rect x="560" y="350" width="179" height="23" rx="5" stroke="none"/>
<path d="M545 352H726V462H640Q618 398 545 352Z" stroke="none"/>
<circle cx="432" cy="535" r="170" fill="none" stroke-width="23"/>
</g></svg>
<!-- small icon track 2 -->
<svg class="a" style="left:29.700px;top:271px" width="22.600" height="23" viewBox="0 0 102 104">
 <g fill="#10d930"><rect x="1" y="0.500" width="19.500" height="47" rx="1.500"/><rect x="24.500" y="0.500" width="44.500" height="23" rx="1.500"/><rect x="24.500" y="27.500" width="44.500" height="20" rx="1.500"/><rect x="73" y="0.500" width="10" height="47" rx="1.500"/><rect x="87" y="0.500" width="13.500" height="23" rx="1.500"/><rect x="87" y="27.500" width="13.500" height="8" rx="1.500"/><rect x="87" y="39.500" width="13.500" height="8" rx="1.500"/></g>
 <rect x="3" y="61" width="96" height="39" rx="3" fill="none" stroke="#10d930" stroke-width="4.500"/>
 <g fill="#10d930"><rect x="11" y="61" width="9" height="26"/><rect x="25" y="61" width="9" height="26"/><rect x="39" y="61" width="9" height="26"/><rect x="53" y="61" width="9" height="26"/><rect x="67" y="61" width="9" height="26"/><rect x="81" y="61" width="9" height="26"/></g>
</svg>
<!-- timeline -->
<div class="a" style="left:296px;top:66px;width:514px;height:658px;background:#2f2f2f"></div>
<div class="a" style="left:296px;top:66px;width:8px;height:194px;background:#484848"></div>
<div class="a" style="left:296px;top:260.500px;width:8px;height:41px;background:#464646"></div>
<div class="a" style="left:304px;top:258.400px;width:506px;height:2.400px;background:#0a0a0a"></div>
<div class="a" style="left:304px;top:301.400px;width:506px;height:1px;background:#141414"></div>
<div class="a" style="left:304.300px;top:65.700px;width:506px;height:192.700px;background:#50a21c;border-radius:3px 0 0 3px;overflow:hidden">
 <svg class="a" style="left:0;top:0" width="506" height="192" viewBox="0 0 506 192"><g fill="#d4f0b8"><path transform="translate(0,59.2)" d="M0.0 -19.1 L0.5 -7.0 L1.0 -12.5 L1.5 -9.0 L2.0 -8.7 L2.5 -7.1 L3.0 -8.0 L3.5 -5.7 L4.0 -7.2 L4.5 -4.6 L5.0 -7.2 L5.5 -6.7 L6.0 -4.6 L6.5 -5.1 L7.0 -4.6 L7.5 -7.4 L8.0 -8.1 L8.5 -2.8 L9.0 -4.3 L9.5 -5.5 L10.0 -4.4 L10.5 -22.7 L11.0 -25.6 L11.5 -3.1 L12.0 -3.8 L12.5 -2.6 L13.0 -2.4 L13.5 -1.7 L14.0 -2.0 L14.5 -2.4 L15.0 -3.3 L15.5 -6.5 L16.0 -6.5 L16.5 -2.4 L17.0 -1.7 L17.5 -10.0 L18.0 -10.1 L18.5 -0.6 L19.0 -0.6 L19.5 -3.6 L20.0 -3.5 L20.5 -21.3 L21.0 -19.9 L21.5 -2.5 L22.0 -1.9 L22.5 -1.5 L23.0 -7.1 L23.5 -7.9 L24.0 -0.6 L24.5 -2.4 L25.0 -2.6 L25.5 -8.3 L26.0 -9.5 L26.5 -1.4 L27.0 -0.9 L27.5 -0.9 L28.0 -3.5 L28.5 -3.4 L29.0 -0.6 L29.5 -0.6 L30.0 -5.3 L30.5 -5.3 L31.0 -26.5 L31.5 -27.3 L32.0 -2.9 L32.5 -1.4 L33.0 -1.6 L33.5 -7.0 L34.0 -7.4 L34.5 -0.6 L35.0 -3.0 L35.5 -2.8 L36.0 -7.8 L36.5 -8.9 L37.0 -1.2 L37.5 -1.1 L38.0 -0.8 L38.5 -1.1 L39.0 -0.7 L39.5 -0.6 L40.0 -1.6 L40.5 -2.4 L41.0 -17.7 L41.5 -16.6 L42.0 -1.7 L42.5 -1.5 L43.0 -1.4 L43.5 -8.9 L44.0 -7.8 L44.5 -0.6 L45.0 -0.6 L45.5 -2.1 L46.0 -2.2 L46.5 -6.0 L47.0 -6.9 L47.5 -0.6 L48.0 -0.6 L48.5 -1.2 L49.0 -2.1 L49.5 -6.0 L50.0 -6.6 L50.5 -0.7 L51.0 -2.7 L51.5 -2.7 L52.0 -26.8 L52.5 -26.1 L53.0 -2.8 L53.5 -1.9 L54.0 -1.1 L54.5 -1.2 L55.0 -0.6 L55.5 -0.6 L56.0 -0.6 L56.5 -1.4 L57.0 -1.0 L57.5 -14.4 L58.0 -14.9 L58.5 -1.0 L59.0 -0.9 L59.5 -0.7 L60.0 -0.6 L60.5 -0.6 L61.0 -3.3 L61.5 -3.8 L62.0 -21.3 L62.5 -19.7 L63.0 -1.1 L63.5 -1.3 L64.0 -0.9 L64.5 -0.9 L65.0 -0.7 L65.5 -0.6 L66.0 -0.6 L66.5 -1.1 L67.0 -1.0 L67.5 -11.7 L68.0 -13.5 L68.5 -0.6 L69.0 -0.6 L69.5 -1.9 L70.0 -1.0 L70.5 -1.2 L71.0 -0.9 L71.5 -0.6 L72.0 -2.9 L72.5 -6.1 L73.0 -24.3 L73.5 -21.7 L74.0 -7.0 L74.5 -6.1 L75.0 -5.5 L75.5 -6.3 L76.0 -3.8 L76.5 -3.8 L77.0 -4.2 L77.5 -3.6 L78.0 -8.7 L78.5 -9.7 L79.0 -3.2 L79.5 -2.0 L80.0 -2.6 L80.5 -2.3 L81.0 -2.7 L81.5 -1.9 L82.0 -2.0 L82.5 -3.1 L83.0 -3.7 L83.5 -12.2 L84.0 -10.6 L84.5 -2.6 L85.0 -1.7 L85.5 -1.8 L86.0 -7.1 L86.5 -8.0 L87.0 -0.9 L87.5 -0.6 L88.0 -1.3 L88.5 -1.0 L89.0 -16.4 L89.5 -14.4 L90.0 -0.6 L90.5 -1.0 L91.0 -1.1 L91.5 -1.4 L92.0 -0.7 L92.5 -0.6 L93.0 -5.4 L93.5 -5.9 L94.0 -28.9 L94.5 -27.2 L95.0 -3.6 L95.5 -2.3 L96.0 -1.5 L96.5 -1.5 L97.0 -1.0 L97.5 -0.7 L98.0 -1.9 L98.5 -3.3 L99.0 -10.7 L99.5 -11.6 L100.0 -0.9 L100.5 -0.6 L101.0 -0.6 L101.5 -0.8 L102.0 -0.8 L102.5 -0.6 L103.0 -0.6 L103.5 -5.5 L104.0 -3.9 L104.5 -20.3 L105.0 -20.2 L105.5 -1.9 L106.0 -1.7 L106.5 -2.3 L107.0 -6.4 L107.5 -5.8 L108.0 -0.6 L108.5 -2.4 L109.0 -2.9 L109.5 -5.7 L110.0 -6.2 L110.5 -1.1 L111.0 -0.6 L111.5 -1.0 L112.0 -1.7 L112.5 -1.0 L113.0 -0.6 L113.5 -0.6 L114.0 -3.7 L114.5 -2.2 L115.0 -24.3 L115.5 -22.7 L116.0 -2.6 L116.5 -1.6 L117.0 -2.1 L117.5 -3.9 L118.0 -3.9 L118.5 -2.1 L119.0 -1.7 L119.5 -14.2 L120.0 -13.9 L120.5 -4.2 L121.0 -3.8 L121.5 -2.9 L122.0 -4.1 L122.5 -8.5 L123.0 -8.9 L123.5 -2.1 L124.0 -2.5 L124.5 -2.8 L125.0 -17.9 L125.5 -17.5 L126.0 -1.2 L126.5 -1.2 L127.0 -1.1 L127.5 -2.4 L128.0 -1.1 L128.5 -1.0 L129.0 -0.6 L129.5 -1.8 L130.0 -1.4 L130.5 -7.8 L131.0 -8.4 L131.5 -0.7 L132.0 -1.3 L132.5 -1.0 L133.0 -5.7 L133.5 -6.2 L134.0 -0.6 L134.5 -4.0 L135.0 -4.2 L135.5 -27.8 L136.0 -25.2 L136.5 -5.1 L137.0 -2.9 L137.5 -2.0 L138.0 -2.1 L138.5 -9.3 L139.0 -8.8 L139.5 -2.3 L140.0 -2.8 L140.5 -8.5 L141.0 -8.8 L141.5 -0.8 L142.0 -0.6 L142.5 -2.2 L143.0 -1.5 L143.5 -2.9 L144.0 -2.8 L144.5 -0.6 L145.0 -0.6 L145.5 -5.2 L146.0 -4.1 L146.5 -11.8 L147.0 -12.0 L147.5 -2.7 L148.0 -1.8 L148.5 -1.8 L149.0 -1.3 L149.5 -1.0 L150.0 -1.9 L150.5 -1.4 L151.0 -7.8 L151.5 -7.6 L152.0 -0.6 L152.5 -0.6 L153.0 -0.9 L153.5 -1.2 L154.0 -7.9 L154.5 -8.5 L155.0 -0.6 L155.5 -0.6 L156.0 -4.5 L156.5 -5.0 L157.0 -24.5 L157.5 -25.9 L158.0 -3.6 L158.5 -5.3 L159.0 -6.4 L159.5 -11.8 L160.0 -14.7 L160.5 -10.2 L161.0 -11.5 L161.5 -7.6 L162.0 -12.8 L162.5 -12.3 L163.0 -6.1 L163.5 -8.2 L164.0 -5.5 L164.5 -8.7 L165.0 -6.6 L165.5 -4.5 L166.0 -6.9 L166.5 -6.1 L167.0 -18.2 L167.5 -17.9 L168.0 -6.4 L168.5 -3.9 L169.0 -5.4 L169.5 -4.8 L170.0 -8.1 L170.5 -8.1 L171.0 -3.0 L171.5 -3.8 L172.0 -2.9 L172.5 -8.3 L173.0 -8.3 L173.5 -2.5 L174.0 -2.8 L174.5 -3.1 L175.0 -3.5 L175.5 -9.0 L176.0 -8.6 L176.5 -2.6 L177.0 -2.5 L177.5 -24.5 L178.0 -25.1 L178.5 -1.6 L179.0 -2.2 L179.5 -2.0 L180.0 -1.9 L180.5 -1.6 L181.0 -1.7 L181.5 -2.0 L182.0 -2.5 L182.5 -6.3 L183.0 -6.2 L183.5 -1.3 L184.0 -0.6 L184.5 -0.6 L185.0 -1.0 L185.5 -1.1 L186.0 -0.6 L186.5 -0.6 L187.0 -0.6 L187.5 -3.6 L188.0 -3.0 L188.5 -17.1 L189.0 -17.9 L189.5 -3.3 L190.0 -1.4 L190.5 -10.3 L191.0 -9.3 L191.5 -0.6 L192.0 -0.6 L192.5 -2.5 L193.0 -1.6 L193.5 -8.1 L194.0 -8.5 L194.5 -1.0 L195.0 -1.8 L195.5 -1.8 L196.0 -1.4 L196.5 -0.6 L197.0 -0.6 L197.5 -0.6 L198.0 -4.0 L198.5 -5.2 L199.0 -27.6 L199.5 -29.2 L200.0 -2.0 L200.5 -2.0 L201.0 -2.0 L201.5 -0.9 L202.0 -1.0 L202.5 -2.5 L203.0 -2.5 L203.5 -11.5 L204.0 -11.7 L204.5 -0.7 L205.0 -1.2 L205.5 -4.4 L206.0 -5.6 L206.5 -4.7 L207.0 -3.9 L207.5 -3.7 L208.0 -3.9 L208.5 -17.8 L209.0 -17.5 L209.5 -2.5 L210.0 -1.7 L210.5 -1.6 L211.0 -1.9 L211.5 -6.3 L212.0 -6.3 L212.5 -0.9 L213.0 -0.6 L213.5 -1.9 L214.0 -1.3 L214.5 -9.6 L215.0 -10.0 L215.5 -1.3 L216.0 -1.5 L216.5 -0.9 L217.0 -0.6 L217.5 -0.6 L218.0 -0.6 L218.5 -5.7 L219.0 -5.9 L219.5 -27.1 L220.0 -26.8 L220.5 -3.8 L221.0 -1.7 L221.5 -1.9 L222.0 -4.2 L222.5 -3.9 L223.0 -0.6 L223.5 -0.6 L224.0 -2.8 L224.5 -2.1 L225.0 -9.0 L225.5 -8.8 L226.0 -0.6 L226.5 -1.3 L227.0 -0.9 L227.5 -6.9 L228.0 -6.4 L228.5 -0.6 L229.0 -3.3 L229.5 -2.8 L230.0 -15.4 L230.5 -14.8 L231.0 -1.8 L231.5 -1.5 L232.0 -2.0 L232.5 -4.5 L233.0 -4.1 L233.5 -0.6 L234.0 -2.0 L234.5 -2.2 L235.0 -13.2 L235.5 -14.9 L236.0 -1.1 L236.5 -1.5 L237.0 -1.2 L237.5 -2.2 L238.0 -0.8 L238.5 -0.6 L239.0 -0.6 L239.5 -0.6 L240.0 -4.6 L240.5 -7.0 L241.0 -25.0 L241.5 -25.5 L242.0 -3.2 L242.5 -2.7 L243.0 -2.6 L243.5 -1.1 L244.0 -0.7 L244.5 -1.2 L245.0 -1.5 L245.5 -8.2 L246.0 -7.6 L246.5 -0.6 L247.0 -0.6 L247.5 -0.6 L248.0 -0.6 L248.5 -1.0 L249.0 -0.6 L249.5 -0.6 L250.0 -1.5 L250.5 -5.7 L251.0 -5.4 L251.5 -11.8 L252.0 -11.2 L252.5 -4.0 L253.0 -3.3 L253.5 -2.6 L254.0 -2.8 L254.5 -3.5 L255.0 -3.2 L255.5 -2.7 L256.0 -10.8 L256.5 -10.7 L257.0 -1.2 L257.5 -1.4 L258.0 -1.5 L258.5 -0.9 L259.0 -3.1 L259.5 -2.8 L260.0 -0.6 L260.5 -2.6 L261.0 -2.3 L261.5 -24.3 L262.0 -21.5 L262.5 -2.6 L263.0 -2.4 L263.5 -2.6 L264.0 -0.9 L264.5 -0.8 L265.0 -0.6 L265.5 -1.3 L266.0 -2.9 L266.5 -13.9 L267.0 -14.7 L267.5 -0.6 L268.0 -1.1 L268.5 -1.3 L269.0 -6.1 L269.5 -6.1 L270.0 -0.6 L270.5 -0.6 L271.0 -5.6 L271.5 -5.8 L272.0 -19.2 L272.5 -16.9 L273.0 -1.5 L273.5 -1.0 L274.0 -1.6 L274.5 -0.6 L275.0 -0.6 L275.5 -0.6 L276.0 -0.6 L276.5 -1.5 L277.0 -1.4 L277.5 -11.4 L278.0 -10.3 L278.5 -1.2 L279.0 -1.9 L279.5 -2.2 L280.0 -1.1 L280.5 -0.6 L281.0 -0.6 L281.5 -5.5 L282.0 -6.1 L282.5 -27.3 L283.0 -24.8 L283.5 -1.9 L284.0 -2.1 L284.5 -2.3 L285.0 -8.9 L285.5 -9.3 L286.0 -1.5 L286.5 -2.1 L287.0 -3.0 L287.5 -9.8 L288.0 -9.2 L288.5 -1.5 L289.0 -1.1 L289.5 -1.3 L290.0 -1.6 L290.5 -5.6 L291.0 -4.3 L291.5 -4.4 L292.0 -3.6 L292.5 -11.9 L293.0 -11.7 L293.5 -2.4 L294.0 -3.2 L294.5 -1.9 L295.0 -2.6 L295.5 -2.2 L296.0 -7.0 L296.5 -7.9 L297.0 -2.4 L297.5 -1.4 L298.0 -11.4 L298.5 -12.5 L299.0 -0.6 L299.5 -0.6 L300.0 -1.4 L300.5 -2.7 L301.0 -6.0 L301.5 -5.2 L302.0 -0.7 L302.5 -4.1 L303.0 -7.9 L303.5 -27.6 L304.0 -26.6 L304.5 -4.5 L305.0 -1.6 L305.5 -1.8 L306.0 -1.5 L306.5 -1.1 L307.0 -0.6 L307.5 -2.5 L308.0 -1.5 L308.5 -7.4 L309.0 -7.1 L309.5 -0.6 L310.0 -0.6 L310.5 -1.1 L311.0 -0.9 L311.5 -1.7 L312.0 -0.6 L312.5 -0.6 L313.0 -6.1 L313.5 -3.2 L314.0 -16.4 L314.5 -16.4 L315.0 -2.4 L315.5 -2.7 L316.0 -1.9 L316.5 -7.4 L317.0 -7.5 L317.5 -0.7 L318.0 -1.2 L318.5 -1.4 L319.0 -7.5 L319.5 -7.6 L320.0 -0.7 L320.5 -0.6 L321.0 -0.7 L321.5 -0.6 L322.0 -0.6 L322.5 -0.6 L323.0 -3.9 L323.5 -6.7 L324.0 -27.2 L324.5 -23.9 L325.0 -3.5 L325.5 -2.1 L326.0 -1.7 L326.5 -1.3 L327.0 -1.7 L327.5 -0.8 L328.0 -0.9 L328.5 -1.5 L329.0 -8.2 L329.5 -8.9 L330.0 -0.6 L330.5 -0.6 L331.0 -0.6 L331.5 -1.4 L332.0 -0.9 L332.5 -8.9 L333.0 -9.0 L333.5 -3.7 L334.0 -4.1 L334.5 -12.6 L335.0 -12.3 L335.5 -2.6 L336.0 -1.8 L336.5 -1.9 L337.0 -1.3 L337.5 -1.4 L338.0 -1.6 L338.5 -5.3 L339.0 -12.7 L339.5 -9.5 L340.0 -9.9 L340.5 -8.0 L341.0 -4.8 L341.5 -6.0 L342.0 -7.3 L342.5 -9.2 L343.0 -10.3 L343.5 -3.7 L344.0 -4.8 L344.5 -4.2 L345.0 -27.6 L345.5 -24.4 L346.0 -3.4 L346.5 -3.5 L347.0 -2.4 L347.5 -1.9 L348.0 -3.9 L348.5 -3.6 L349.0 -2.4 L349.5 -1.8 L350.0 -3.2 L350.5 -8.0 L351.0 -7.7 L351.5 -1.0 L352.0 -2.7 L352.5 -2.2 L353.0 -9.4 L353.5 -10.1 L354.0 -0.8 L354.5 -0.6 L355.0 -4.1 L355.5 -3.4 L356.0 -12.7 L356.5 -11.6 L357.0 -1.6 L357.5 -2.1 L358.0 -2.0 L358.5 -5.0 L359.0 -4.8 L359.5 -1.6 L360.0 -2.3 L360.5 -12.8 L361.0 -12.6 L361.5 -0.7 L362.0 -1.4 L362.5 -1.4 L363.0 -1.5 L363.5 -0.9 L364.0 -0.6 L364.5 -0.6 L365.0 -5.2 L365.5 -2.5 L366.0 -24.0 L366.5 -23.6 L367.0 -1.7 L367.5 -2.0 L368.0 -1.0 L368.5 -1.1 L369.0 -7.2 L369.5 -7.2 L370.0 -0.6 L370.5 -3.0 L371.0 -2.3 L371.5 -10.1 L372.0 -10.2 L372.5 -1.3 L373.0 -1.4 L373.5 -5.4 L374.0 -5.3 L374.5 -0.7 L375.0 -0.6 L375.5 -0.6 L376.0 -3.3 L376.5 -3.0 L377.0 -12.6 L377.5 -13.3 L378.0 -2.0 L378.5 -1.8 L379.0 -6.3 L379.5 -5.9 L380.0 -0.8 L380.5 -0.6 L381.0 -2.5 L381.5 -2.5 L382.0 -12.1 L382.5 -11.9 L383.0 -1.2 L383.5 -1.7 L384.0 -1.3 L384.5 -2.4 L385.0 -0.8 L385.5 -0.6 L386.0 -6.4 L386.5 -4.0 L387.0 -21.2 L387.5 -21.5 L388.0 -3.9 L388.5 -1.6 L389.0 -1.9 L389.5 -2.1 L390.0 -6.7 L390.5 -6.2 L391.0 -2.2 L391.5 -1.1 L392.0 -6.1 L392.5 -5.9 L393.0 -0.8 L393.5 -1.1 L394.0 -1.4 L394.5 -8.0 L395.0 -8.0 L395.5 -0.6 L396.0 -0.6 L396.5 -2.5 L397.0 -3.8 L397.5 -15.6 L398.0 -15.1 L398.5 -2.2 L399.0 -2.0 L399.5 -1.1 L400.0 -1.1 L400.5 -1.1 L401.0 -0.9 L401.5 -1.4 L402.0 -1.4 L402.5 -13.7 L403.0 -14.9 L403.5 -1.1 L404.0 -1.1 L404.5 -1.8 L405.0 -5.9 L405.5 -5.9 L406.0 -0.7 L406.5 -0.6 L407.0 -4.3 L407.5 -3.1 L408.0 -26.0 L408.5 -23.7 L409.0 -1.9 L409.5 -1.9 L410.0 -1.6 L410.5 -4.4 L411.0 -4.1 L411.5 -0.6 L412.0 -1.8 L412.5 -6.0 L413.0 -5.9 L413.5 -14.5 L414.0 -14.4 L414.5 -5.9 L415.0 -3.5 L415.5 -5.1 L416.0 -4.2 L416.5 -3.3 L417.0 -2.5 L417.5 -3.5 L418.0 -2.5 L418.5 -17.0 L419.0 -15.7 L419.5 -1.9 L420.0 -1.9 L420.5 -1.6 L421.0 -1.3 L421.5 -1.0 L422.0 -0.6 L422.5 -0.6 L423.0 -1.8 L423.5 -0.9 L424.0 -6.5 L424.5 -6.5 L425.0 -0.6 L425.5 -1.0 L426.0 -1.0 L426.5 -7.2 L427.0 -8.0 L427.5 -0.6 L428.0 -3.8 L428.5 -3.0 L429.0 -24.2 L429.5 -22.8 L430.0 -3.5 L430.5 -2.0 L431.0 -1.0 L431.5 -0.9 L432.0 -0.9 L432.5 -0.6 L433.0 -0.8 L433.5 -2.5 L434.0 -2.2 L434.5 -12.0 L435.0 -12.5 L435.5 -0.8 L436.0 -1.2 L436.5 -1.5 L437.0 -2.5 L437.5 -1.1 L438.0 -0.6 L438.5 -2.6 L439.0 -4.9 L439.5 -16.4 L440.0 -19.1 L440.5 -3.1 L441.0 -2.2 L441.5 -1.6 L442.0 -2.1 L442.5 -1.1 L443.0 -0.7 L443.5 -2.6 L444.0 -3.0 L444.5 -13.0 L445.0 -12.2 L445.5 -0.9 L446.0 -1.6 L446.5 -2.7 L447.0 -8.3 L447.5 -8.0 L448.0 -0.6 L448.5 -0.6 L449.0 -0.6 L449.5 -3.3 L450.0 -3.0 L450.5 -25.3 L451.0 -24.9 L451.5 -1.8 L452.0 -1.2 L452.5 -1.6 L453.0 -5.2 L453.5 -5.4 L454.0 -0.8 L454.5 -1.2 L455.0 -1.4 L455.5 -6.9 L456.0 -7.4 L456.5 -3.3 L457.0 -4.1 L457.5 -3.7 L458.0 -3.1 L458.5 -2.0 L459.0 -1.6 L459.5 -3.1 L460.0 -2.6 L460.5 -14.1 L461.0 -14.3 L461.5 -1.5 L462.0 -1.6 L462.5 -1.0 L463.0 -4.2 L463.5 -4.5 L464.0 -0.6 L464.5 -2.7 L465.0 -1.5 L465.5 -8.4 L466.0 -8.0 L466.5 -1.2 L467.0 -0.6 L467.5 -2.5 L468.0 -1.9 L468.5 -9.3 L469.0 -8.6 L469.5 -5.7 L470.0 -3.8 L470.5 -26.1 L471.0 -27.7 L471.5 -3.4 L472.0 -2.6 L472.5 -1.7 L473.0 -1.8 L473.5 -2.1 L474.0 -0.7 L474.5 -0.6 L475.0 -0.6 L475.5 -2.0 L476.0 -1.9 L476.5 -10.8 L477.0 -11.3 L477.5 -0.6 L478.0 -1.0 L478.5 -0.9 L479.0 -2.7 L479.5 -2.9 L480.0 -2.4 L480.5 -4.5 L481.0 -18.1 L481.5 -19.0 L482.0 -2.0 L482.5 -0.8 L483.0 -2.1 L483.5 -2.1 L484.0 -4.5 L484.5 -5.0 L485.0 -0.6 L485.5 -1.8 L486.0 -2.0 L486.5 -14.3 L487.0 -16.6 L487.5 -0.6 L488.0 -0.6 L488.5 -0.6 L489.0 -0.6 L489.5 -0.7 L490.0 -0.6 L490.5 -0.6 L491.0 -4.2 L491.5 -2.8 L492.0 -25.1 L492.5 -28.2 L493.0 -9.0 L493.5 -9.9 L494.0 -9.9 L494.5 -9.5 L495.0 -7.8 L495.5 -6.0 L496.0 -4.5 L496.5 -5.0 L497.0 -14.4 L497.5 -15.0 L498.0 -4.6 L498.5 -3.1 L499.0 -4.0 L499.5 -3.4 L500.0 -3.0 L500.5 -2.1 L501.0 -3.1 L501.5 -4.3 L502.0 -2.4 L502.5 -16.4 L503.0 -17.8 L503.5 -2.0 L504.0 -1.8 L504.5 -1.4 L505.0 -5.2 L505.5 -5.0 L506.0 -2.4 L506.0 2.2 L505.5 3.9 L505.0 4.2 L504.5 1.3 L504.0 1.5 L503.5 1.8 L503.0 12.8 L502.5 14.1 L502.0 2.6 L501.5 3.6 L501.0 2.8 L500.5 1.8 L500.0 3.2 L499.5 3.2 L499.0 4.0 L498.5 2.6 L498.0 4.3 L497.5 14.3 L497.0 12.4 L496.5 4.4 L496.0 4.8 L495.5 5.7 L495.0 6.4 L494.5 9.6 L494.0 10.5 L493.5 10.9 L493.0 8.5 L492.5 27.8 L492.0 27.4 L491.5 2.6 L491.0 3.4 L490.5 0.6 L490.0 0.6 L489.5 0.6 L489.0 0.6 L488.5 0.7 L488.0 0.6 L487.5 0.6 L487.0 16.2 L486.5 15.9 L486.0 2.0 L485.5 1.5 L485.0 0.6 L484.5 4.8 L484.0 3.7 L483.5 1.7 L483.0 1.8 L482.5 0.7 L482.0 1.9 L481.5 15.6 L481.0 18.2 L480.5 4.4 L480.0 2.5 L479.5 2.3 L479.0 2.7 L478.5 0.7 L478.0 0.9 L477.5 0.6 L477.0 9.8 L476.5 10.6 L476.0 2.1 L475.5 1.6 L475.0 0.6 L474.5 0.6 L474.0 0.7 L473.5 2.2 L473.0 1.9 L472.5 1.8 L472.0 2.5 L471.5 3.3 L471.0 23.7 L470.5 28.0 L470.0 3.5 L469.5 5.5 L469.0 9.8 L468.5 7.5 L468.0 1.9 L467.5 2.8 L467.0 0.6 L466.5 1.1 L466.0 8.0 L465.5 6.9 L465.0 1.5 L464.5 2.3 L464.0 0.6 L463.5 3.3 L463.0 4.1 L462.5 1.0 L462.0 1.6 L461.5 1.5 L461.0 11.9 L460.5 14.1 L460.0 2.3 L459.5 2.6 L459.0 1.6 L458.5 1.8 L458.0 2.5 L457.5 3.4 L457.0 3.3 L456.5 3.3 L456.0 7.4 L455.5 5.6 L455.0 1.4 L454.5 1.3 L454.0 0.7 L453.5 4.6 L453.0 3.9 L452.5 1.6 L452.0 1.2 L451.5 1.6 L451.0 24.3 L450.5 23.0 L450.0 2.7 L449.5 3.1 L449.0 0.6 L448.5 0.6 L448.0 0.6 L447.5 6.2 L447.0 7.6 L446.5 2.2 L446.0 1.5 L445.5 0.9 L445.0 10.8 L444.5 13.2 L444.0 3.1 L443.5 2.4 L443.0 0.7 L442.5 1.1 L442.0 1.9 L441.5 1.5 L441.0 2.1 L440.5 2.7 L440.0 15.6 L439.5 18.7 L439.0 4.0 L438.5 2.7 L438.0 0.6 L437.5 0.9 L437.0 2.4 L436.5 1.3 L436.0 1.2 L435.5 0.7 L435.0 12.9 L434.5 9.7 L434.0 2.0 L433.5 2.2 L433.0 0.7 L432.5 0.6 L432.0 1.0 L431.5 0.8 L431.0 1.0 L430.5 1.7 L430.0 3.2 L429.5 19.5 L429.0 18.8 L428.5 3.0 L428.0 3.9 L427.5 0.6 L427.0 7.2 L426.5 6.8 L426.0 1.1 L425.5 1.0 L425.0 0.6 L424.5 6.0 L424.0 6.0 L423.5 1.0 L423.0 1.9 L422.5 0.6 L422.0 0.6 L421.5 1.1 L421.0 1.4 L420.5 1.5 L420.0 1.6 L419.5 2.1 L419.0 14.5 L418.5 15.0 L418.0 2.4 L417.5 3.7 L417.0 2.7 L416.5 3.0 L416.0 4.2 L415.5 4.6 L415.0 3.7 L414.5 6.3 L414.0 13.2 L413.5 12.4 L413.0 6.1 L412.5 6.6 L412.0 1.8 L411.5 0.6 L411.0 3.8 L410.5 3.6 L410.0 1.6 L409.5 1.7 L409.0 1.5 L408.5 23.1 L408.0 26.1 L407.5 3.3 L407.0 4.1 L406.5 0.6 L406.0 0.7 L405.5 4.8 L405.0 5.9 L404.5 1.9 L404.0 1.0 L403.5 1.2 L403.0 12.2 L402.5 11.2 L402.0 1.5 L401.5 1.4 L401.0 1.0 L400.5 1.2 L400.0 1.2 L399.5 1.1 L399.0 1.7 L398.5 2.0 L398.0 14.2 L397.5 14.0 L397.0 4.0 L396.5 2.2 L396.0 0.6 L395.5 0.6 L395.0 6.3 L394.5 6.5 L394.0 1.2 L393.5 0.9 L393.0 0.8 L392.5 6.2 L392.0 6.1 L391.5 1.1 L391.0 2.1 L390.5 4.9 L390.0 5.2 L389.5 1.9 L389.0 1.7 L388.5 1.4 L388.0 4.1 L387.5 23.4 L387.0 18.4 L386.5 4.0 L386.0 6.0 L385.5 0.6 L385.0 0.9 L384.5 2.5 L384.0 1.4 L383.5 1.4 L383.0 1.3 L382.5 12.3 L382.0 9.3 L381.5 2.3 L381.0 2.6 L380.5 0.7 L380.0 0.7 L379.5 4.6 L379.0 6.2 L378.5 1.5 L378.0 2.1 L377.5 10.6 L377.0 11.9 L376.5 2.4 L376.0 2.9 L375.5 0.6 L375.0 0.6 L374.5 0.7 L374.0 4.5 L373.5 4.7 L373.0 1.5 L372.5 1.4 L372.0 11.5 L371.5 11.2 L371.0 1.9 L370.5 2.9 L370.0 0.6 L369.5 7.1 L369.0 7.3 L368.5 1.0 L368.0 1.1 L367.5 2.0 L367.0 1.6 L366.5 21.7 L366.0 23.0 L365.5 2.1 L365.0 5.3 L364.5 0.6 L364.0 0.6 L363.5 0.8 L363.0 1.6 L362.5 1.1 L362.0 1.3 L361.5 0.6 L361.0 10.5 L360.5 10.7 L360.0 2.5 L359.5 1.4 L359.0 3.6 L358.5 5.2 L358.0 1.9 L357.5 2.2 L357.0 1.6 L356.5 9.4 L356.0 11.5 L355.5 3.0 L355.0 3.6 L354.5 0.6 L354.0 0.8 L353.5 10.6 L353.0 10.0 L352.5 2.2 L352.0 2.5 L351.5 0.9 L351.0 8.8 L350.5 7.9 L350.0 3.5 L349.5 1.5 L349.0 2.5 L348.5 3.1 L348.0 2.9 L347.5 1.7 L347.0 2.5 L346.5 3.6 L346.0 3.7 L345.5 23.4 L345.0 27.5 L344.5 3.4 L344.0 4.9 L343.5 4.0 L343.0 10.4 L342.5 8.3 L342.0 7.6 L341.5 6.4 L341.0 4.7 L340.5 8.2 L340.0 10.8 L339.5 8.6 L339.0 12.9 L338.5 4.6 L338.0 1.5 L337.5 1.3 L337.0 1.2 L336.5 1.7 L336.0 1.4 L335.5 2.5 L335.0 9.1 L334.5 11.1 L334.0 3.5 L333.5 3.8 L333.0 6.8 L332.5 6.8 L332.0 0.9 L331.5 1.2 L331.0 0.6 L330.5 0.6 L330.0 0.6 L329.5 6.7 L329.0 8.5 L328.5 1.5 L328.0 0.8 L327.5 0.7 L327.0 1.6 L326.5 1.3 L326.0 1.5 L325.5 2.0 L325.0 3.6 L324.5 20.6 L324.0 21.0 L323.5 6.3 L323.0 4.2 L322.5 0.6 L322.0 0.6 L321.5 0.6 L321.0 0.7 L320.5 0.6 L320.0 0.6 L319.5 7.3 L319.0 6.2 L318.5 1.5 L318.0 1.2 L317.5 0.6 L317.0 7.3 L316.5 6.8 L316.0 2.1 L315.5 2.7 L315.0 2.0 L314.5 17.8 L314.0 18.0 L313.5 3.4 L313.0 5.9 L312.5 0.6 L312.0 0.6 L311.5 1.6 L311.0 0.8 L310.5 1.0 L310.0 0.6 L309.5 0.6 L309.0 7.3 L308.5 6.0 L308.0 1.6 L307.5 2.1 L307.0 0.6 L306.5 1.2 L306.0 1.4 L305.5 1.8 L305.0 1.6 L304.5 4.4 L304.0 21.3 L303.5 26.6 L303.0 7.5 L302.5 3.5 L302.0 0.7 L301.5 5.2 L301.0 5.7 L300.5 2.8 L300.0 1.3 L299.5 0.6 L299.0 0.6 L298.5 11.1 L298.0 9.4 L297.5 1.2 L297.0 2.5 L296.5 7.5 L296.0 6.0 L295.5 2.0 L295.0 2.8 L294.5 1.8 L294.0 2.6 L293.5 2.0 L293.0 12.6 L292.5 12.1 L292.0 3.0 L291.5 4.2 L291.0 3.6 L290.5 4.6 L290.0 1.6 L289.5 1.3 L289.0 1.1 L288.5 1.5 L288.0 7.4 L287.5 7.3 L287.0 2.5 L286.5 1.7 L286.0 1.6 L285.5 7.7 L285.0 7.3 L284.5 2.0 L284.0 2.3 L283.5 1.7 L283.0 22.6 L282.5 27.8 L282.0 5.2 L281.5 4.7 L281.0 0.6 L280.5 0.6 L280.0 0.9 L279.5 1.8 L279.0 1.6 L278.5 1.1 L278.0 9.1 L277.5 8.2 L277.0 1.5 L276.5 1.5 L276.0 0.6 L275.5 0.6 L275.0 0.6 L274.5 0.6 L274.0 1.3 L273.5 1.0 L273.0 1.5 L272.5 14.0 L272.0 16.0 L271.5 4.7 L271.0 5.5 L270.5 0.6 L270.0 0.6 L269.5 5.4 L269.0 6.8 L268.5 1.3 L268.0 1.2 L267.5 0.6 L267.0 13.9 L266.5 13.7 L266.0 2.6 L265.5 1.1 L265.0 0.6 L264.5 0.7 L264.0 0.8 L263.5 2.6 L263.0 2.4 L262.5 2.2 L262.0 23.7 L261.5 18.1 L261.0 1.9 L260.5 2.2 L260.0 0.6 L259.5 2.6 L259.0 3.0 L258.5 1.0 L258.0 1.3 L257.5 1.3 L257.0 1.0 L256.5 11.2 L256.0 8.4 L255.5 2.6 L255.0 2.7 L254.5 3.5 L254.0 2.4 L253.5 2.3 L253.0 3.2 L252.5 3.6 L252.0 10.1 L251.5 10.5 L251.0 5.0 L250.5 5.5 L250.0 1.6 L249.5 0.6 L249.0 0.6 L248.5 0.9 L248.0 0.6 L247.5 0.6 L247.0 0.6 L246.5 0.6 L246.0 6.3 L245.5 7.7 L245.0 1.6 L244.5 1.3 L244.0 0.8 L243.5 1.1 L243.0 2.3 L242.5 2.6 L242.0 3.3 L241.5 25.1 L241.0 18.6 L240.5 6.3 L240.0 4.6 L239.5 0.6 L239.0 0.6 L238.5 0.6 L238.0 0.7 L237.5 2.4 L237.0 1.1 L236.5 1.5 L236.0 1.2 L235.5 13.6 L235.0 13.4 L234.5 1.9 L234.0 2.0 L233.5 0.6 L233.0 4.2 L232.5 4.1 L232.0 1.7 L231.5 1.5 L231.0 1.6 L230.5 15.6 L230.0 15.0 L229.5 2.8 L229.0 3.6 L228.5 0.6 L228.0 6.8 L227.5 5.9 L227.0 0.9 L226.5 1.3 L226.0 0.6 L225.5 9.2 L225.0 9.5 L224.5 2.0 L224.0 2.6 L223.5 0.6 L223.0 0.6 L222.5 3.7 L222.0 3.2 L221.5 1.9 L221.0 1.5 L220.5 3.5 L220.0 23.5 L219.5 25.1 L219.0 6.4 L218.5 4.7 L218.0 0.6 L217.5 0.6 L217.0 0.6 L216.5 0.9 L216.0 1.2 L215.5 1.1 L215.0 9.5 L214.5 7.9 L214.0 1.2 L213.5 1.9 L213.0 0.6 L212.5 0.8 L212.0 5.9 L211.5 5.6 L211.0 1.8 L210.5 1.4 L210.0 1.7 L209.5 2.1 L209.0 17.4 L208.5 16.9 L208.0 3.7 L207.5 4.0 L207.0 3.2 L206.5 4.6 L206.0 5.0 L205.5 3.9 L205.0 1.3 L204.5 0.7 L204.0 11.5 L203.5 11.1 L203.0 2.6 L202.5 2.6 L202.0 1.0 L201.5 0.9 L201.0 1.9 L200.5 1.9 L200.0 1.9 L199.5 23.1 L199.0 22.0 L198.5 5.0 L198.0 4.0 L197.5 0.6 L197.0 0.6 L196.5 0.6 L196.0 1.5 L195.5 1.5 L195.0 1.9 L194.5 1.0 L194.0 8.2 L193.5 8.6 L193.0 1.4 L192.5 2.2 L192.0 0.6 L191.5 0.6 L191.0 10.4 L190.5 8.8 L190.0 1.2 L189.5 2.8 L189.0 14.2 L188.5 15.0 L188.0 2.9 L187.5 3.1 L187.0 0.6 L186.5 0.6 L186.0 0.6 L185.5 1.0 L185.0 1.0 L184.5 0.6 L184.0 0.6 L183.5 1.4 L183.0 6.4 L182.5 6.2 L182.0 2.0 L181.5 1.8 L181.0 1.7 L180.5 1.6 L180.0 1.5 L179.5 1.8 L179.0 1.9 L178.5 1.6 L178.0 22.1 L177.5 21.1 L177.0 2.1 L176.5 2.8 L176.0 8.1 L175.5 8.4 L175.0 3.8 L174.5 3.0 L174.0 2.9 L173.5 2.4 L173.0 8.2 L172.5 8.3 L172.0 2.4 L171.5 4.1 L171.0 2.7 L170.5 6.6 L170.0 7.0 L169.5 4.0 L169.0 5.2 L168.5 3.7 L168.0 5.4 L167.5 20.2 L167.0 20.3 L166.5 5.0 L166.0 7.1 L165.5 4.8 L165.0 6.9 L164.5 7.9 L164.0 5.2 L163.5 8.5 L163.0 5.0 L162.5 10.7 L162.0 10.7 L161.5 6.3 L161.0 11.7 L160.5 10.4 L160.0 12.2 L159.5 12.2 L159.0 5.8 L158.5 5.4 L158.0 3.0 L157.5 26.1 L157.0 27.0 L156.5 5.5 L156.0 4.4 L155.5 0.6 L155.0 0.6 L154.5 7.0 L154.0 7.6 L153.5 1.0 L153.0 0.8 L152.5 0.6 L152.0 0.6 L151.5 7.4 L151.0 8.0 L150.5 1.5 L150.0 2.0 L149.5 1.1 L149.0 1.2 L148.5 1.9 L148.0 1.7 L147.5 2.2 L147.0 8.9 L146.5 12.4 L146.0 3.3 L145.5 5.3 L145.0 0.6 L144.5 0.6 L144.0 3.2 L143.5 2.9 L143.0 1.5 L142.5 2.0 L142.0 0.6 L141.5 0.8 L141.0 8.2 L140.5 7.4 L140.0 2.8 L139.5 2.2 L139.0 7.2 L138.5 8.1 L138.0 1.8 L137.5 1.8 L137.0 3.1 L136.5 4.9 L136.0 24.2 L135.5 28.0 L135.0 4.5 L134.5 3.6 L134.0 0.6 L133.5 6.2 L133.0 5.6 L132.5 1.1 L132.0 1.1 L131.5 0.6 L131.0 7.1 L130.5 6.5 L130.0 1.1 L129.5 1.6 L129.0 0.6 L128.5 1.0 L128.0 1.0 L127.5 2.6 L127.0 1.1 L126.5 1.0 L126.0 1.2 L125.5 18.3 L125.0 16.4 L124.5 2.8 L124.0 2.4 L123.5 2.3 L123.0 7.5 L122.5 8.6 L122.0 4.3 L121.5 2.9 L121.0 3.1 L120.5 4.1 L120.0 14.1 L119.5 15.3 L119.0 1.4 L118.5 1.8 L118.0 4.2 L117.5 3.8 L117.0 2.0 L116.5 1.6 L116.0 2.6 L115.5 19.1 L115.0 23.5 L114.5 1.8 L114.0 3.4 L113.5 0.6 L113.0 0.6 L112.5 1.0 L112.0 1.7 L111.5 1.0 L111.0 0.6 L110.5 1.2 L110.0 5.9 L109.5 6.0 L109.0 2.5 L108.5 2.6 L108.0 0.6 L107.5 6.1 L107.0 5.9 L106.5 1.9 L106.0 1.6 L105.5 2.0 L105.0 18.9 L104.5 17.9 L104.0 4.3 L103.5 4.6 L103.0 0.6 L102.5 0.6 L102.0 0.7 L101.5 0.8 L101.0 0.6 L100.5 0.6 L100.0 0.8 L99.5 9.2 L99.0 10.0 L98.5 2.9 L98.0 2.0 L97.5 0.7 L97.0 0.9 L96.5 1.6 L96.0 1.4 L95.5 2.0 L95.0 2.9 L94.5 28.1 L94.0 27.5 L93.5 4.9 L93.0 5.5 L92.5 0.6 L92.0 0.7 L91.5 1.4 L91.0 0.9 L90.5 0.8 L90.0 0.6 L89.5 12.6 L89.0 13.2 L88.5 1.1 L88.0 1.4 L87.5 0.6 L87.0 0.8 L86.5 6.2 L86.0 5.9 L85.5 1.9 L85.0 1.5 L84.5 2.5 L84.0 11.3 L83.5 12.3 L83.0 3.8 L82.5 2.5 L82.0 2.0 L81.5 1.9 L81.0 2.9 L80.5 2.2 L80.0 2.6 L79.5 2.0 L79.0 3.5 L78.5 7.1 L78.0 9.5 L77.5 3.3 L77.0 3.4 L76.5 3.8 L76.0 3.6 L75.5 5.6 L75.0 5.3 L74.5 6.1 L74.0 7.5 L73.5 22.0 L73.0 19.7 L72.5 5.9 L72.0 2.5 L71.5 0.6 L71.0 0.8 L70.5 1.1 L70.0 1.0 L69.5 1.5 L69.0 0.6 L68.5 0.6 L68.0 11.9 L67.5 11.0 L67.0 0.9 L66.5 1.1 L66.0 0.6 L65.5 0.6 L65.0 0.7 L64.5 0.8 L64.0 0.8 L63.5 1.2 L63.0 1.0 L62.5 20.3 L62.0 21.8 L61.5 3.3 L61.0 3.6 L60.5 0.6 L60.0 0.6 L59.5 0.7 L59.0 0.7 L58.5 0.9 L58.0 11.5 L57.5 15.0 L57.0 0.8 L56.5 1.2 L56.0 0.6 L55.5 0.6 L55.0 0.6 L54.5 1.0 L54.0 1.2 L53.5 1.7 L53.0 2.9 L52.5 23.8 L52.0 27.6 L51.5 2.3 L51.0 2.6 L50.5 0.6 L50.0 5.8 L49.5 5.3 L49.0 1.7 L48.5 1.1 L48.0 0.6 L47.5 0.6 L47.0 5.2 L46.5 5.4 L46.0 1.8 L45.5 1.9 L45.0 0.6 L44.5 0.6 L44.0 7.5 L43.5 8.6 L43.0 1.2 L42.5 1.3 L42.0 1.6 L41.5 14.1 L41.0 18.2 L40.5 2.3 L40.0 1.5 L39.5 0.6 L39.0 0.6 L38.5 1.1 L38.0 0.9 L37.5 1.0 L37.0 1.2 L36.5 6.3 L36.0 8.7 L35.5 3.0 L35.0 3.0 L34.5 0.6 L34.0 7.0 L33.5 8.1 L33.0 1.6 L32.5 1.2 L32.0 2.5 L31.5 26.6 L31.0 22.0 L30.5 5.7 L30.0 4.5 L29.5 0.6 L29.0 0.6 L28.5 3.7 L28.0 2.9 L27.5 0.8 L27.0 0.8 L26.5 1.1 L26.0 6.7 L25.5 8.3 L25.0 2.1 L24.5 2.1 L24.0 0.6 L23.5 7.9 L23.0 5.8 L22.5 1.6 L22.0 2.0 L21.5 2.6 L21.0 18.1 L20.5 20.9 L20.0 3.4 L19.5 3.9 L19.0 0.6 L18.5 0.6 L18.0 7.9 L17.5 7.5 L17.0 1.6 L16.5 2.4 L16.0 6.3 L15.5 5.4 L15.0 2.7 L14.5 2.4 L14.0 1.8 L13.5 1.7 L13.0 2.5 L12.5 2.8 L12.0 3.3 L11.5 3.4 L11.0 22.5 L10.5 24.2 L10.0 4.5 L9.5 5.2 L9.0 3.6 L8.5 2.9 L8.0 7.6 L7.5 7.4 L7.0 4.0 L6.5 5.1 L6.0 4.5 L5.5 5.7 L5.0 7.5 L4.5 4.6 L4.0 6.3 L3.5 5.0 L3.0 7.9 L2.5 6.3 L2.0 9.4 L1.5 7.4 L1.0 10.8 L0.5 5.8 L0.0 18.2Z"/><path transform="translate(0,147.7)" d="M0.0 -28.9 L0.5 -7.0 L1.0 -12.5 L1.5 -9.0 L2.0 -10.5 L2.5 -10.8 L3.0 -8.0 L3.5 -5.7 L4.0 -7.2 L4.5 -4.6 L5.0 -9.4 L5.5 -8.4 L6.0 -4.6 L6.5 -5.1 L7.0 -4.6 L7.5 -11.2 L8.0 -12.2 L8.5 -2.8 L9.0 -4.3 L9.5 -5.5 L10.0 -4.4 L10.5 -34.4 L11.0 -38.8 L11.5 -3.1 L12.0 -3.8 L12.5 -2.6 L13.0 -2.4 L13.5 -1.7 L14.0 -2.0 L14.5 -2.4 L15.0 -3.3 L15.5 -9.8 L16.0 -9.8 L16.5 -2.4 L17.0 -1.7 L17.5 -15.2 L18.0 -15.3 L18.5 -0.6 L19.0 -0.6 L19.5 -3.6 L20.0 -3.5 L20.5 -32.3 L21.0 -30.1 L21.5 -2.5 L22.0 -1.9 L22.5 -1.5 L23.0 -10.7 L23.5 -12.0 L24.0 -0.6 L24.5 -2.4 L25.0 -2.6 L25.5 -12.6 L26.0 -14.4 L26.5 -1.4 L27.0 -0.9 L27.5 -0.9 L28.0 -5.3 L28.5 -5.2 L29.0 -0.6 L29.5 -0.6 L30.0 -5.3 L30.5 -5.3 L31.0 -40.2 L31.5 -41.3 L32.0 -2.9 L32.5 -1.4 L33.0 -1.6 L33.5 -10.6 L34.0 -11.3 L34.5 -0.6 L35.0 -3.0 L35.5 -2.8 L36.0 -11.9 L36.5 -13.5 L37.0 -1.2 L37.5 -1.1 L38.0 -0.8 L38.5 -1.1 L39.0 -0.7 L39.5 -0.6 L40.0 -1.6 L40.5 -2.4 L41.0 -26.9 L41.5 -25.2 L42.0 -1.7 L42.5 -1.5 L43.0 -1.4 L43.5 -13.5 L44.0 -11.9 L44.5 -0.6 L45.0 -0.6 L45.5 -2.1 L46.0 -2.2 L46.5 -9.1 L47.0 -10.5 L47.5 -0.6 L48.0 -0.6 L48.5 -1.2 L49.0 -2.1 L49.5 -9.1 L50.0 -10.0 L50.5 -0.7 L51.0 -2.7 L51.5 -2.7 L52.0 -40.6 L52.5 -39.5 L53.0 -2.8 L53.5 -1.9 L54.0 -1.1 L54.5 -1.2 L55.0 -0.6 L55.5 -0.6 L56.0 -0.6 L56.5 -1.4 L57.0 -1.0 L57.5 -21.9 L58.0 -22.6 L58.5 -1.0 L59.0 -0.9 L59.5 -0.7 L60.0 -0.6 L60.5 -0.6 L61.0 -3.3 L61.5 -3.8 L62.0 -32.2 L62.5 -29.9 L63.0 -1.1 L63.5 -1.3 L64.0 -0.9 L64.5 -0.9 L65.0 -0.7 L65.5 -0.6 L66.0 -0.6 L66.5 -1.1 L67.0 -1.0 L67.5 -17.8 L68.0 -20.5 L68.5 -0.6 L69.0 -0.6 L69.5 -1.9 L70.0 -1.0 L70.5 -1.2 L71.0 -0.9 L71.5 -0.6 L72.0 -2.9 L72.5 -6.1 L73.0 -36.8 L73.5 -32.9 L74.0 -7.0 L74.5 -6.1 L75.0 -6.5 L75.5 -6.3 L76.0 -3.8 L76.5 -3.8 L77.0 -4.2 L77.5 -3.6 L78.0 -13.1 L78.5 -14.7 L79.0 -3.2 L79.5 -2.0 L80.0 -2.6 L80.5 -2.3 L81.0 -2.7 L81.5 -1.9 L82.0 -2.0 L82.5 -3.1 L83.0 -3.7 L83.5 -18.5 L84.0 -16.0 L84.5 -2.6 L85.0 -1.7 L85.5 -1.8 L86.0 -10.7 L86.5 -12.1 L87.0 -0.9 L87.5 -0.6 L88.0 -1.3 L88.5 -1.0 L89.0 -24.9 L89.5 -21.8 L90.0 -0.6 L90.5 -1.0 L91.0 -1.1 L91.5 -1.4 L92.0 -0.7 L92.5 -0.6 L93.0 -5.4 L93.5 -5.9 L94.0 -43.8 L94.5 -41.1 L95.0 -3.6 L95.5 -2.3 L96.0 -1.5 L96.5 -1.5 L97.0 -1.0 L97.5 -0.7 L98.0 -1.9 L98.5 -3.3 L99.0 -16.3 L99.5 -17.6 L100.0 -0.9 L100.5 -0.6 L101.0 -0.6 L101.5 -0.8 L102.0 -0.8 L102.5 -0.6 L103.0 -0.6 L103.5 -5.5 L104.0 -3.9 L104.5 -30.7 L105.0 -30.6 L105.5 -1.9 L106.0 -1.7 L106.5 -2.3 L107.0 -9.7 L107.5 -8.8 L108.0 -0.6 L108.5 -2.4 L109.0 -2.9 L109.5 -8.6 L110.0 -9.5 L110.5 -1.1 L111.0 -0.6 L111.5 -1.0 L112.0 -1.7 L112.5 -1.0 L113.0 -0.6 L113.5 -0.6 L114.0 -3.7 L114.5 -2.2 L115.0 -36.8 L115.5 -34.3 L116.0 -2.6 L116.5 -1.6 L117.0 -2.1 L117.5 -5.9 L118.0 -5.9 L118.5 -2.1 L119.0 -1.7 L119.5 -21.6 L120.0 -21.1 L120.5 -4.2 L121.0 -3.8 L121.5 -2.9 L122.0 -4.1 L122.5 -12.9 L123.0 -13.5 L123.5 -2.1 L124.0 -2.5 L124.5 -2.8 L125.0 -27.1 L125.5 -26.5 L126.0 -1.2 L126.5 -1.2 L127.0 -1.1 L127.5 -2.4 L128.0 -1.1 L128.5 -1.0 L129.0 -0.6 L129.5 -1.8 L130.0 -1.4 L130.5 -11.9 L131.0 -12.7 L131.5 -0.7 L132.0 -1.3 L132.5 -1.0 L133.0 -8.7 L133.5 -9.4 L134.0 -0.6 L134.5 -4.0 L135.0 -4.2 L135.5 -42.1 L136.0 -38.1 L136.5 -5.1 L137.0 -2.9 L137.5 -2.0 L138.0 -2.1 L138.5 -14.0 L139.0 -13.3 L139.5 -2.3 L140.0 -2.8 L140.5 -12.8 L141.0 -13.3 L141.5 -0.8 L142.0 -0.6 L142.5 -2.2 L143.0 -1.5 L143.5 -4.4 L144.0 -4.2 L144.5 -0.6 L145.0 -0.6 L145.5 -5.2 L146.0 -4.1 L146.5 -17.9 L147.0 -18.1 L147.5 -2.7 L148.0 -1.8 L148.5 -1.8 L149.0 -1.3 L149.5 -1.0 L150.0 -1.9 L150.5 -1.4 L151.0 -11.8 L151.5 -11.5 L152.0 -0.6 L152.5 -0.6 L153.0 -0.9 L153.5 -1.2 L154.0 -11.9 L154.5 -12.8 L155.0 -0.6 L155.5 -0.6 L156.0 -4.5 L156.5 -5.0 L157.0 -37.1 L157.5 -39.2 L158.0 -3.6 L158.5 -5.3 L159.0 -6.4 L159.5 -13.6 L160.0 -14.7 L160.5 -10.2 L161.0 -11.5 L161.5 -7.6 L162.0 -19.4 L162.5 -18.6 L163.0 -6.1 L163.5 -8.2 L164.0 -5.5 L164.5 -8.7 L165.0 -6.6 L165.5 -4.5 L166.0 -6.9 L166.5 -6.1 L167.0 -27.6 L167.5 -27.1 L168.0 -6.4 L168.5 -3.9 L169.0 -5.4 L169.5 -4.8 L170.0 -12.3 L170.5 -12.2 L171.0 -3.0 L171.5 -3.8 L172.0 -2.9 L172.5 -12.5 L173.0 -12.5 L173.5 -2.5 L174.0 -2.8 L174.5 -3.1 L175.0 -3.5 L175.5 -13.7 L176.0 -13.0 L176.5 -2.6 L177.0 -2.5 L177.5 -37.2 L178.0 -38.1 L178.5 -1.6 L179.0 -2.2 L179.5 -2.0 L180.0 -1.9 L180.5 -1.6 L181.0 -1.7 L181.5 -2.0 L182.0 -2.5 L182.5 -9.6 L183.0 -9.4 L183.5 -1.3 L184.0 -0.6 L184.5 -0.6 L185.0 -1.0 L185.5 -1.1 L186.0 -0.6 L186.5 -0.6 L187.0 -0.6 L187.5 -3.6 L188.0 -3.0 L188.5 -25.9 L189.0 -27.1 L189.5 -3.3 L190.0 -1.4 L190.5 -15.6 L191.0 -14.0 L191.5 -0.6 L192.0 -0.6 L192.5 -2.5 L193.0 -1.6 L193.5 -12.2 L194.0 -12.8 L194.5 -1.0 L195.0 -1.8 L195.5 -1.8 L196.0 -1.4 L196.5 -0.6 L197.0 -0.6 L197.5 -0.6 L198.0 -4.0 L198.5 -5.2 L199.0 -41.8 L199.5 -44.2 L200.0 -2.0 L200.5 -2.0 L201.0 -2.0 L201.5 -0.9 L202.0 -1.0 L202.5 -2.5 L203.0 -2.5 L203.5 -17.4 L204.0 -17.8 L204.5 -0.7 L205.0 -1.2 L205.5 -4.4 L206.0 -5.6 L206.5 -4.7 L207.0 -3.9 L207.5 -3.7 L208.0 -3.9 L208.5 -26.9 L209.0 -26.6 L209.5 -2.5 L210.0 -1.7 L210.5 -1.6 L211.0 -1.9 L211.5 -9.5 L212.0 -9.5 L212.5 -0.9 L213.0 -0.6 L213.5 -1.9 L214.0 -1.3 L214.5 -14.5 L215.0 -15.2 L215.5 -1.3 L216.0 -1.5 L216.5 -0.9 L217.0 -0.6 L217.5 -0.6 L218.0 -0.6 L218.5 -5.7 L219.0 -5.9 L219.5 -41.0 L220.0 -40.6 L220.5 -3.8 L221.0 -1.7 L221.5 -1.9 L222.0 -6.4 L222.5 -6.0 L223.0 -0.6 L223.5 -0.6 L224.0 -2.8 L224.5 -2.1 L225.0 -13.6 L225.5 -13.3 L226.0 -0.6 L226.5 -1.3 L227.0 -0.9 L227.5 -10.5 L228.0 -9.7 L228.5 -0.6 L229.0 -3.3 L229.5 -2.8 L230.0 -23.3 L230.5 -22.5 L231.0 -1.8 L231.5 -1.5 L232.0 -2.0 L232.5 -6.8 L233.0 -6.3 L233.5 -0.6 L234.0 -2.0 L234.5 -2.2 L235.0 -20.0 L235.5 -22.5 L236.0 -1.1 L236.5 -1.5 L237.0 -1.2 L237.5 -2.2 L238.0 -0.8 L238.5 -0.6 L239.0 -0.6 L239.5 -0.6 L240.0 -4.6 L240.5 -7.0 L241.0 -37.9 L241.5 -38.6 L242.0 -3.2 L242.5 -2.7 L243.0 -2.6 L243.5 -1.1 L244.0 -0.7 L244.5 -1.2 L245.0 -1.5 L245.5 -12.5 L246.0 -11.6 L246.5 -0.6 L247.0 -0.6 L247.5 -0.6 L248.0 -0.6 L248.5 -1.0 L249.0 -0.6 L249.5 -0.6 L250.0 -1.5 L250.5 -5.7 L251.0 -5.4 L251.5 -17.8 L252.0 -17.0 L252.5 -4.0 L253.0 -3.3 L253.5 -2.6 L254.0 -2.8 L254.5 -3.5 L255.0 -3.2 L255.5 -2.7 L256.0 -16.4 L256.5 -16.2 L257.0 -1.2 L257.5 -1.4 L258.0 -1.5 L258.5 -0.9 L259.0 -4.7 L259.5 -4.3 L260.0 -0.6 L260.5 -2.6 L261.0 -2.3 L261.5 -36.8 L262.0 -32.6 L262.5 -2.6 L263.0 -2.4 L263.5 -2.6 L264.0 -0.9 L264.5 -0.8 L265.0 -0.6 L265.5 -1.3 L266.0 -2.9 L266.5 -21.1 L267.0 -22.3 L267.5 -0.6 L268.0 -1.1 L268.5 -1.3 L269.0 -9.3 L269.5 -9.2 L270.0 -0.6 L270.5 -0.6 L271.0 -5.6 L271.5 -5.8 L272.0 -29.1 L272.5 -25.6 L273.0 -1.5 L273.5 -1.0 L274.0 -1.6 L274.5 -0.6 L275.0 -0.6 L275.5 -0.6 L276.0 -0.6 L276.5 -1.5 L277.0 -1.4 L277.5 -17.2 L278.0 -15.6 L278.5 -1.2 L279.0 -1.9 L279.5 -2.2 L280.0 -1.1 L280.5 -0.6 L281.0 -0.6 L281.5 -5.5 L282.0 -6.1 L282.5 -41.4 L283.0 -37.6 L283.5 -1.9 L284.0 -2.1 L284.5 -2.3 L285.0 -13.6 L285.5 -14.1 L286.0 -1.5 L286.5 -2.1 L287.0 -3.0 L287.5 -14.9 L288.0 -13.9 L288.5 -1.5 L289.0 -1.1 L289.5 -1.3 L290.0 -1.6 L290.5 -5.6 L291.0 -4.3 L291.5 -4.4 L292.0 -3.6 L292.5 -18.1 L293.0 -17.8 L293.5 -2.4 L294.0 -3.2 L294.5 -1.9 L295.0 -2.6 L295.5 -2.2 L296.0 -10.6 L296.5 -12.0 L297.0 -2.4 L297.5 -1.4 L298.0 -17.3 L298.5 -18.9 L299.0 -0.6 L299.5 -0.6 L300.0 -1.4 L300.5 -2.7 L301.0 -9.1 L301.5 -7.9 L302.0 -0.7 L302.5 -4.1 L303.0 -7.9 L303.5 -41.8 L304.0 -40.3 L304.5 -4.5 L305.0 -1.6 L305.5 -1.8 L306.0 -1.5 L306.5 -1.1 L307.0 -0.6 L307.5 -2.5 L308.0 -1.5 L308.5 -11.2 L309.0 -10.8 L309.5 -0.6 L310.0 -0.6 L310.5 -1.1 L311.0 -0.9 L311.5 -1.7 L312.0 -0.6 L312.5 -0.6 L313.0 -6.1 L313.5 -3.2 L314.0 -24.9 L314.5 -24.9 L315.0 -2.4 L315.5 -2.7 L316.0 -1.9 L316.5 -11.2 L317.0 -11.4 L317.5 -0.7 L318.0 -1.2 L318.5 -1.4 L319.0 -11.4 L319.5 -11.5 L320.0 -0.7 L320.5 -0.6 L321.0 -0.7 L321.5 -0.6 L322.0 -0.6 L322.5 -0.6 L323.0 -3.9 L323.5 -6.7 L324.0 -41.3 L324.5 -36.2 L325.0 -3.5 L325.5 -2.1 L326.0 -1.7 L326.5 -1.3 L327.0 -1.7 L327.5 -0.8 L328.0 -0.9 L328.5 -1.5 L329.0 -12.4 L329.5 -13.5 L330.0 -0.6 L330.5 -0.6 L331.0 -0.6 L331.5 -1.4 L332.0 -0.9 L332.5 -13.5 L333.0 -13.6 L333.5 -3.7 L334.0 -4.1 L334.5 -19.0 L335.0 -18.7 L335.5 -2.6 L336.0 -1.8 L336.5 -1.9 L337.0 -1.3 L337.5 -1.4 L338.0 -1.6 L338.5 -5.3 L339.0 -12.7 L339.5 -9.5 L340.0 -12.2 L340.5 -12.2 L341.0 -4.8 L341.5 -6.0 L342.0 -7.3 L342.5 -13.9 L343.0 -15.7 L343.5 -3.7 L344.0 -4.8 L344.5 -4.2 L345.0 -41.8 L345.5 -37.0 L346.0 -3.4 L346.5 -3.5 L347.0 -2.4 L347.5 -1.9 L348.0 -5.9 L348.5 -5.4 L349.0 -2.4 L349.5 -1.8 L350.0 -3.2 L350.5 -12.1 L351.0 -11.7 L351.5 -1.0 L352.0 -2.7 L352.5 -2.2 L353.0 -14.2 L353.5 -15.3 L354.0 -0.8 L354.5 -0.6 L355.0 -4.1 L355.5 -3.4 L356.0 -19.3 L356.5 -17.5 L357.0 -1.6 L357.5 -2.1 L358.0 -2.0 L358.5 -7.6 L359.0 -7.2 L359.5 -1.6 L360.0 -2.3 L360.5 -19.4 L361.0 -19.1 L361.5 -0.7 L362.0 -1.4 L362.5 -1.4 L363.0 -1.5 L363.5 -0.9 L364.0 -0.6 L364.5 -0.6 L365.0 -5.2 L365.5 -2.5 L366.0 -36.3 L366.5 -35.7 L367.0 -1.7 L367.5 -2.0 L368.0 -1.0 L368.5 -1.1 L369.0 -10.9 L369.5 -10.9 L370.0 -0.6 L370.5 -3.0 L371.0 -2.3 L371.5 -15.4 L372.0 -15.5 L372.5 -1.3 L373.0 -1.4 L373.5 -8.2 L374.0 -8.1 L374.5 -0.7 L375.0 -0.6 L375.5 -0.6 L376.0 -3.3 L376.5 -3.0 L377.0 -19.1 L377.5 -20.2 L378.0 -2.0 L378.5 -1.8 L379.0 -9.6 L379.5 -9.0 L380.0 -0.8 L380.5 -0.6 L381.0 -2.5 L381.5 -2.5 L382.0 -18.3 L382.5 -18.1 L383.0 -1.2 L383.5 -1.7 L384.0 -1.3 L384.5 -2.4 L385.0 -0.8 L385.5 -0.6 L386.0 -6.4 L386.5 -4.0 L387.0 -32.1 L387.5 -32.5 L388.0 -3.9 L388.5 -1.6 L389.0 -1.9 L389.5 -2.1 L390.0 -10.1 L390.5 -9.4 L391.0 -2.2 L391.5 -1.1 L392.0 -9.3 L392.5 -9.0 L393.0 -0.8 L393.5 -1.1 L394.0 -1.4 L394.5 -12.1 L395.0 -12.2 L395.5 -0.6 L396.0 -0.6 L396.5 -2.5 L397.0 -3.8 L397.5 -23.6 L398.0 -22.9 L398.5 -2.2 L399.0 -2.0 L399.5 -1.1 L400.0 -1.1 L400.5 -1.1 L401.0 -0.9 L401.5 -1.4 L402.0 -1.4 L402.5 -20.7 L403.0 -22.5 L403.5 -1.1 L404.0 -1.1 L404.5 -1.8 L405.0 -8.9 L405.5 -9.0 L406.0 -0.7 L406.5 -0.6 L407.0 -4.3 L407.5 -3.1 L408.0 -39.4 L408.5 -35.9 L409.0 -1.9 L409.5 -1.9 L410.0 -1.6 L410.5 -6.7 L411.0 -6.3 L411.5 -0.6 L412.0 -1.8 L412.5 -6.0 L413.0 -5.9 L413.5 -21.9 L414.0 -21.8 L414.5 -5.9 L415.0 -3.5 L415.5 -5.1 L416.0 -4.2 L416.5 -3.3 L417.0 -2.5 L417.5 -3.5 L418.0 -2.5 L418.5 -25.7 L419.0 -23.8 L419.5 -1.9 L420.0 -1.9 L420.5 -1.6 L421.0 -1.3 L421.5 -1.0 L422.0 -0.6 L422.5 -0.6 L423.0 -1.8 L423.5 -0.9 L424.0 -9.9 L424.5 -9.8 L425.0 -0.6 L425.5 -1.0 L426.0 -1.0 L426.5 -10.9 L427.0 -12.1 L427.5 -0.6 L428.0 -3.8 L428.5 -3.0 L429.0 -36.6 L429.5 -34.6 L430.0 -3.5 L430.5 -2.0 L431.0 -1.0 L431.5 -0.9 L432.0 -0.9 L432.5 -0.6 L433.0 -0.8 L433.5 -2.5 L434.0 -2.2 L434.5 -18.2 L435.0 -19.0 L435.5 -0.8 L436.0 -1.2 L436.5 -1.5 L437.0 -2.5 L437.5 -1.1 L438.0 -0.6 L438.5 -2.6 L439.0 -4.9 L439.5 -24.9 L440.0 -29.0 L440.5 -3.1 L441.0 -2.2 L441.5 -1.6 L442.0 -2.1 L442.5 -1.1 L443.0 -0.7 L443.5 -2.6 L444.0 -3.0 L444.5 -19.7 L445.0 -18.5 L445.5 -0.9 L446.0 -1.6 L446.5 -2.7 L447.0 -12.6 L447.5 -12.2 L448.0 -0.6 L448.5 -0.6 L449.0 -0.6 L449.5 -3.3 L450.0 -3.0 L450.5 -38.3 L451.0 -37.7 L451.5 -1.8 L452.0 -1.2 L452.5 -1.6 L453.0 -7.9 L453.5 -8.2 L454.0 -0.8 L454.5 -1.2 L455.0 -1.4 L455.5 -10.5 L456.0 -11.2 L456.5 -3.3 L457.0 -4.1 L457.5 -3.7 L458.0 -3.1 L458.5 -2.0 L459.0 -1.6 L459.5 -3.1 L460.0 -2.6 L460.5 -21.4 L461.0 -21.7 L461.5 -1.5 L462.0 -1.6 L462.5 -1.0 L463.0 -6.3 L463.5 -6.8 L464.0 -0.6 L464.5 -2.7 L465.0 -1.5 L465.5 -12.7 L466.0 -12.1 L466.5 -1.2 L467.0 -0.6 L467.5 -2.5 L468.0 -1.9 L468.5 -14.2 L469.0 -13.1 L469.5 -5.7 L470.0 -3.8 L470.5 -39.5 L471.0 -42.0 L471.5 -3.4 L472.0 -2.6 L472.5 -1.7 L473.0 -1.8 L473.5 -2.1 L474.0 -0.7 L474.5 -0.6 L475.0 -0.6 L475.5 -2.0 L476.0 -1.9 L476.5 -16.3 L477.0 -17.1 L477.5 -0.6 L478.0 -1.0 L478.5 -0.9 L479.0 -4.1 L479.5 -4.3 L480.0 -2.4 L480.5 -4.5 L481.0 -27.5 L481.5 -28.7 L482.0 -2.0 L482.5 -0.8 L483.0 -2.1 L483.5 -2.1 L484.0 -6.8 L484.5 -7.5 L485.0 -0.6 L485.5 -1.8 L486.0 -2.0 L486.5 -21.7 L487.0 -25.1 L487.5 -0.6 L488.0 -0.6 L488.5 -0.6 L489.0 -0.6 L489.5 -0.7 L490.0 -0.6 L490.5 -0.6 L491.0 -4.2 L491.5 -2.8 L492.0 -38.1 L492.5 -42.7 L493.0 -9.0 L493.5 -9.9 L494.0 -9.9 L494.5 -9.5 L495.0 -9.2 L495.5 -6.0 L496.0 -4.5 L496.5 -5.0 L497.0 -21.8 L497.5 -22.7 L498.0 -4.6 L498.5 -3.1 L499.0 -4.0 L499.5 -3.4 L500.0 -3.0 L500.5 -2.1 L501.0 -3.1 L501.5 -4.3 L502.0 -2.4 L502.5 -24.8 L503.0 -27.0 L503.5 -2.0 L504.0 -1.8 L504.5 -1.4 L505.0 -7.8 L505.5 -7.6 L506.0 -2.4 L506.0 2.2 L505.5 5.9 L505.0 6.3 L504.5 1.3 L504.0 1.5 L503.5 1.8 L503.0 19.4 L502.5 21.4 L502.0 2.6 L501.5 3.6 L501.0 2.8 L500.5 1.8 L500.0 3.2 L499.5 3.2 L499.0 4.0 L498.5 2.6 L498.0 4.3 L497.5 21.7 L497.0 18.8 L496.5 4.4 L496.0 4.8 L495.5 5.7 L495.0 9.6 L494.5 9.6 L494.0 10.5 L493.5 10.9 L493.0 8.5 L492.5 42.2 L492.0 41.5 L491.5 2.6 L491.0 3.4 L490.5 0.6 L490.0 0.6 L489.5 0.6 L489.0 0.6 L488.5 0.7 L488.0 0.6 L487.5 0.6 L487.0 24.5 L486.5 24.1 L486.0 2.0 L485.5 1.5 L485.0 0.6 L484.5 7.3 L484.0 5.6 L483.5 1.7 L483.0 1.8 L482.5 0.7 L482.0 1.9 L481.5 23.7 L481.0 27.6 L480.5 4.4 L480.0 2.5 L479.5 3.5 L479.0 4.0 L478.5 0.7 L478.0 0.9 L477.5 0.6 L477.0 14.9 L476.5 16.1 L476.0 2.1 L475.5 1.6 L475.0 0.6 L474.5 0.6 L474.0 0.7 L473.5 2.2 L473.0 1.9 L472.5 1.8 L472.0 2.5 L471.5 3.3 L471.0 35.8 L470.5 42.4 L470.0 3.5 L469.5 5.5 L469.0 14.9 L468.5 11.4 L468.0 1.9 L467.5 2.8 L467.0 0.6 L466.5 1.1 L466.0 12.2 L465.5 10.4 L465.0 1.5 L464.5 2.3 L464.0 0.6 L463.5 4.9 L463.0 6.1 L462.5 1.0 L462.0 1.6 L461.5 1.5 L461.0 18.0 L460.5 21.3 L460.0 2.3 L459.5 2.6 L459.0 1.6 L458.5 1.8 L458.0 2.5 L457.5 3.4 L457.0 3.3 L456.5 3.3 L456.0 11.1 L455.5 8.6 L455.0 1.4 L454.5 1.3 L454.0 0.7 L453.5 7.0 L453.0 5.9 L452.5 1.6 L452.0 1.2 L451.5 1.6 L451.0 36.7 L450.5 34.9 L450.0 2.7 L449.5 3.1 L449.0 0.6 L448.5 0.6 L448.0 0.6 L447.5 9.5 L447.0 11.5 L446.5 2.2 L446.0 1.5 L445.5 0.9 L445.0 16.4 L444.5 19.9 L444.0 3.1 L443.5 2.4 L443.0 0.7 L442.5 1.1 L442.0 1.9 L441.5 1.5 L441.0 2.1 L440.5 2.7 L440.0 23.6 L439.5 28.3 L439.0 4.0 L438.5 2.7 L438.0 0.6 L437.5 0.9 L437.0 2.4 L436.5 1.3 L436.0 1.2 L435.5 0.7 L435.0 19.6 L434.5 14.8 L434.0 2.0 L433.5 2.2 L433.0 0.7 L432.5 0.6 L432.0 1.0 L431.5 0.8 L431.0 1.0 L430.5 1.7 L430.0 3.2 L429.5 29.5 L429.0 28.4 L428.5 3.0 L428.0 3.9 L427.5 0.6 L427.0 10.9 L426.5 10.3 L426.0 1.1 L425.5 1.0 L425.0 0.6 L424.5 9.2 L424.0 9.0 L423.5 1.0 L423.0 1.9 L422.5 0.6 L422.0 0.6 L421.5 1.1 L421.0 1.4 L420.5 1.5 L420.0 1.6 L419.5 2.1 L419.0 21.9 L418.5 22.8 L418.0 2.4 L417.5 3.7 L417.0 2.7 L416.5 3.0 L416.0 4.2 L415.5 4.6 L415.0 3.7 L414.5 6.3 L414.0 20.0 L413.5 18.8 L413.0 6.1 L412.5 6.6 L412.0 1.8 L411.5 0.6 L411.0 5.8 L410.5 5.5 L410.0 1.6 L409.5 1.7 L409.0 1.5 L408.5 35.0 L408.0 39.5 L407.5 3.3 L407.0 4.1 L406.5 0.6 L406.0 0.7 L405.5 7.2 L405.0 9.0 L404.5 1.9 L404.0 1.0 L403.5 1.2 L403.0 18.5 L402.5 17.0 L402.0 1.5 L401.5 1.4 L401.0 1.0 L400.5 1.2 L400.0 1.2 L399.5 1.1 L399.0 1.7 L398.5 2.0 L398.0 21.5 L397.5 21.2 L397.0 4.0 L396.5 2.2 L396.0 0.6 L395.5 0.6 L395.0 9.5 L394.5 9.9 L394.0 1.2 L393.5 0.9 L393.0 0.8 L392.5 9.4 L392.0 9.2 L391.5 1.1 L391.0 2.1 L390.5 7.5 L390.0 8.0 L389.5 1.9 L389.0 1.7 L388.5 1.4 L388.0 4.1 L387.5 35.5 L387.0 27.8 L386.5 4.0 L386.0 6.0 L385.5 0.6 L385.0 0.9 L384.5 2.5 L384.0 1.4 L383.5 1.4 L383.0 1.3 L382.5 18.6 L382.0 14.1 L381.5 2.3 L381.0 2.6 L380.5 0.7 L380.0 0.7 L379.5 6.9 L379.0 9.5 L378.5 1.5 L378.0 2.1 L377.5 16.0 L377.0 18.0 L376.5 2.4 L376.0 2.9 L375.5 0.6 L375.0 0.6 L374.5 0.7 L374.0 6.8 L373.5 7.2 L373.0 1.5 L372.5 1.4 L372.0 17.5 L371.5 16.9 L371.0 1.9 L370.5 2.9 L370.0 0.6 L369.5 10.8 L369.0 11.0 L368.5 1.0 L368.0 1.1 L367.5 2.0 L367.0 1.6 L366.5 32.8 L366.0 34.8 L365.5 2.1 L365.0 5.3 L364.5 0.6 L364.0 0.6 L363.5 0.8 L363.0 1.6 L362.5 1.1 L362.0 1.3 L361.5 0.6 L361.0 15.9 L360.5 16.3 L360.0 2.5 L359.5 1.4 L359.0 5.5 L358.5 7.8 L358.0 1.9 L357.5 2.2 L357.0 1.6 L356.5 14.2 L356.0 17.5 L355.5 3.0 L355.0 3.6 L354.5 0.6 L354.0 0.8 L353.5 16.0 L353.0 15.2 L352.5 2.2 L352.0 2.5 L351.5 0.9 L351.0 13.3 L350.5 12.0 L350.0 3.5 L349.5 1.5 L349.0 2.5 L348.5 4.7 L348.0 4.3 L347.5 1.7 L347.0 2.5 L346.5 3.6 L346.0 3.7 L345.5 35.5 L345.0 41.7 L344.5 3.4 L344.0 4.9 L343.5 4.0 L343.0 15.7 L342.5 12.5 L342.0 7.6 L341.5 6.4 L341.0 4.7 L340.5 12.4 L340.0 11.5 L339.5 8.6 L339.0 12.9 L338.5 4.6 L338.0 1.5 L337.5 1.3 L337.0 1.2 L336.5 1.7 L336.0 1.4 L335.5 2.5 L335.0 13.9 L334.5 16.9 L334.0 3.5 L333.5 3.8 L333.0 10.4 L332.5 10.2 L332.0 0.9 L331.5 1.2 L331.0 0.6 L330.5 0.6 L330.0 0.6 L329.5 10.1 L329.0 12.8 L328.5 1.5 L328.0 0.8 L327.5 0.7 L327.0 1.6 L326.5 1.3 L326.0 1.5 L325.5 2.0 L325.0 3.6 L324.5 31.2 L324.0 31.8 L323.5 6.3 L323.0 4.2 L322.5 0.6 L322.0 0.6 L321.5 0.6 L321.0 0.7 L320.5 0.6 L320.0 0.6 L319.5 11.1 L319.0 9.4 L318.5 1.5 L318.0 1.2 L317.5 0.6 L317.0 11.1 L316.5 10.2 L316.0 2.1 L315.5 2.7 L315.0 2.0 L314.5 26.9 L314.0 27.3 L313.5 3.4 L313.0 5.9 L312.5 0.6 L312.0 0.6 L311.5 1.6 L311.0 0.8 L310.5 1.0 L310.0 0.6 L309.5 0.6 L309.0 11.0 L308.5 9.1 L308.0 1.6 L307.5 2.1 L307.0 0.6 L306.5 1.2 L306.0 1.4 L305.5 1.8 L305.0 1.6 L304.5 4.4 L304.0 32.2 L303.5 40.2 L303.0 7.5 L302.5 3.5 L302.0 0.7 L301.5 7.9 L301.0 8.7 L300.5 2.8 L300.0 1.3 L299.5 0.6 L299.0 0.6 L298.5 16.8 L298.0 14.2 L297.5 1.2 L297.0 2.5 L296.5 11.3 L296.0 9.1 L295.5 2.0 L295.0 2.8 L294.5 1.8 L294.0 2.6 L293.5 2.0 L293.0 19.1 L292.5 18.4 L292.0 3.0 L291.5 4.2 L291.0 3.6 L290.5 4.6 L290.0 1.6 L289.5 1.3 L289.0 1.1 L288.5 1.5 L288.0 11.2 L287.5 11.1 L287.0 2.5 L286.5 1.7 L286.0 1.6 L285.5 11.7 L285.0 11.0 L284.5 2.0 L284.0 2.3 L283.5 1.7 L283.0 34.3 L282.5 42.1 L282.0 5.2 L281.5 4.7 L281.0 0.6 L280.5 0.6 L280.0 0.9 L279.5 1.8 L279.0 1.6 L278.5 1.1 L278.0 13.7 L277.5 12.4 L277.0 1.5 L276.5 1.5 L276.0 0.6 L275.5 0.6 L275.0 0.6 L274.5 0.6 L274.0 1.3 L273.5 1.0 L273.0 1.5 L272.5 21.2 L272.0 24.2 L271.5 4.7 L271.0 5.5 L270.5 0.6 L270.0 0.6 L269.5 8.1 L269.0 10.3 L268.5 1.3 L268.0 1.2 L267.5 0.6 L267.0 21.1 L266.5 20.8 L266.0 2.6 L265.5 1.1 L265.0 0.6 L264.5 0.7 L264.0 0.8 L263.5 2.6 L263.0 2.4 L262.5 2.2 L262.0 35.8 L261.5 27.4 L261.0 1.9 L260.5 2.2 L260.0 0.6 L259.5 3.9 L259.0 4.5 L258.5 1.0 L258.0 1.3 L257.5 1.3 L257.0 1.0 L256.5 17.0 L256.0 12.7 L255.5 2.6 L255.0 2.7 L254.5 3.5 L254.0 2.4 L253.5 2.3 L253.0 3.2 L252.5 3.6 L252.0 15.3 L251.5 15.9 L251.0 5.0 L250.5 5.5 L250.0 1.6 L249.5 0.6 L249.0 0.6 L248.5 0.9 L248.0 0.6 L247.5 0.6 L247.0 0.6 L246.5 0.6 L246.0 9.5 L245.5 11.7 L245.0 1.6 L244.5 1.3 L244.0 0.8 L243.5 1.1 L243.0 2.3 L242.5 2.6 L242.0 3.3 L241.5 38.0 L241.0 28.1 L240.5 6.3 L240.0 4.6 L239.5 0.6 L239.0 0.6 L238.5 0.6 L238.0 0.7 L237.5 2.4 L237.0 1.1 L236.5 1.5 L236.0 1.2 L235.5 20.6 L235.0 20.3 L234.5 1.9 L234.0 2.0 L233.5 0.6 L233.0 6.4 L232.5 6.2 L232.0 1.7 L231.5 1.5 L231.0 1.6 L230.5 23.7 L230.0 22.8 L229.5 2.8 L229.0 3.6 L228.5 0.6 L228.0 10.4 L227.5 9.0 L227.0 0.9 L226.5 1.3 L226.0 0.6 L225.5 14.0 L225.0 14.4 L224.5 2.0 L224.0 2.6 L223.5 0.6 L223.0 0.6 L222.5 5.7 L222.0 4.9 L221.5 1.9 L221.0 1.5 L220.5 3.5 L220.0 35.6 L219.5 38.0 L219.0 6.4 L218.5 4.7 L218.0 0.6 L217.5 0.6 L217.0 0.6 L216.5 0.9 L216.0 1.2 L215.5 1.1 L215.0 14.4 L214.5 12.0 L214.0 1.2 L213.5 1.9 L213.0 0.6 L212.5 0.8 L212.0 8.9 L211.5 8.5 L211.0 1.8 L210.5 1.4 L210.0 1.7 L209.5 2.1 L209.0 26.4 L208.5 25.6 L208.0 3.7 L207.5 4.0 L207.0 3.2 L206.5 4.6 L206.0 5.0 L205.5 3.9 L205.0 1.3 L204.5 0.7 L204.0 17.4 L203.5 16.8 L203.0 2.6 L202.5 2.6 L202.0 1.0 L201.5 0.9 L201.0 1.9 L200.5 1.9 L200.0 1.9 L199.5 35.0 L199.0 33.3 L198.5 5.0 L198.0 4.0 L197.5 0.6 L197.0 0.6 L196.5 0.6 L196.0 1.5 L195.5 1.5 L195.0 1.9 L194.5 1.0 L194.0 12.4 L193.5 13.0 L193.0 1.4 L192.5 2.2 L192.0 0.6 L191.5 0.6 L191.0 15.7 L190.5 13.4 L190.0 1.2 L189.5 2.8 L189.0 21.5 L188.5 22.7 L188.0 2.9 L187.5 3.1 L187.0 0.6 L186.5 0.6 L186.0 0.6 L185.5 1.0 L185.0 1.0 L184.5 0.6 L184.0 0.6 L183.5 1.4 L183.0 9.7 L182.5 9.4 L182.0 2.0 L181.5 1.8 L181.0 1.7 L180.5 1.6 L180.0 1.5 L179.5 1.8 L179.0 1.9 L178.5 1.6 L178.0 33.5 L177.5 32.0 L177.0 2.1 L176.5 2.8 L176.0 12.3 L175.5 12.7 L175.0 3.8 L174.5 3.0 L174.0 2.9 L173.5 2.4 L173.0 12.4 L172.5 12.5 L172.0 2.4 L171.5 4.1 L171.0 2.7 L170.5 10.0 L170.0 10.7 L169.5 4.0 L169.0 5.2 L168.5 3.7 L168.0 5.4 L167.5 30.7 L167.0 30.8 L166.5 5.0 L166.0 7.1 L165.5 4.8 L165.0 6.9 L164.5 7.9 L164.0 5.2 L163.5 8.5 L163.0 5.0 L162.5 16.2 L162.0 16.2 L161.5 6.3 L161.0 11.7 L160.5 10.4 L160.0 13.8 L159.5 12.3 L159.0 5.8 L158.5 5.4 L158.0 3.0 L157.5 39.5 L157.0 40.9 L156.5 5.5 L156.0 4.4 L155.5 0.6 L155.0 0.6 L154.5 10.6 L154.0 11.5 L153.5 1.0 L153.0 0.8 L152.5 0.6 L152.0 0.6 L151.5 11.3 L151.0 12.1 L150.5 1.5 L150.0 2.0 L149.5 1.1 L149.0 1.2 L148.5 1.9 L148.0 1.7 L147.5 2.2 L147.0 13.5 L146.5 18.7 L146.0 3.3 L145.5 5.3 L145.0 0.6 L144.5 0.6 L144.0 4.9 L143.5 4.4 L143.0 1.5 L142.5 2.0 L142.0 0.6 L141.5 0.8 L141.0 12.4 L140.5 11.2 L140.0 2.8 L139.5 2.2 L139.0 11.0 L138.5 12.3 L138.0 1.8 L137.5 1.8 L137.0 3.1 L136.5 4.9 L136.0 36.7 L135.5 42.5 L135.0 4.5 L134.5 3.6 L134.0 0.6 L133.5 9.4 L133.0 8.4 L132.5 1.1 L132.0 1.1 L131.5 0.6 L131.0 10.8 L130.5 9.9 L130.0 1.1 L129.5 1.6 L129.0 0.6 L128.5 1.0 L128.0 1.0 L127.5 2.6 L127.0 1.1 L126.5 1.0 L126.0 1.2 L125.5 27.8 L125.0 24.9 L124.5 2.8 L124.0 2.4 L123.5 2.3 L123.0 11.4 L122.5 13.1 L122.0 4.3 L121.5 2.9 L121.0 3.1 L120.5 4.1 L120.0 21.4 L119.5 23.2 L119.0 1.4 L118.5 1.8 L118.0 6.4 L117.5 5.8 L117.0 2.0 L116.5 1.6 L116.0 2.6 L115.5 28.9 L115.0 35.6 L114.5 1.8 L114.0 3.4 L113.5 0.6 L113.0 0.6 L112.5 1.0 L112.0 1.7 L111.5 1.0 L111.0 0.6 L110.5 1.2 L110.0 9.0 L109.5 9.1 L109.0 2.5 L108.5 2.6 L108.0 0.6 L107.5 9.3 L107.0 9.0 L106.5 1.9 L106.0 1.6 L105.5 2.0 L105.0 28.6 L104.5 27.2 L104.0 4.3 L103.5 4.6 L103.0 0.6 L102.5 0.6 L102.0 0.7 L101.5 0.8 L101.0 0.6 L100.5 0.6 L100.0 0.8 L99.5 13.9 L99.0 15.2 L98.5 2.9 L98.0 2.0 L97.5 0.7 L97.0 0.9 L96.5 1.6 L96.0 1.4 L95.5 2.0 L95.0 2.9 L94.5 42.5 L94.0 41.6 L93.5 4.9 L93.0 5.5 L92.5 0.6 L92.0 0.7 L91.5 1.4 L91.0 0.9 L90.5 0.8 L90.0 0.6 L89.5 19.1 L89.0 20.0 L88.5 1.1 L88.0 1.4 L87.5 0.6 L87.0 0.8 L86.5 9.5 L86.0 8.9 L85.5 1.9 L85.0 1.5 L84.5 2.5 L84.0 17.1 L83.5 18.6 L83.0 3.8 L82.5 2.5 L82.0 2.0 L81.5 1.9 L81.0 2.9 L80.5 2.2 L80.0 2.6 L79.5 2.0 L79.0 3.5 L78.5 10.8 L78.0 14.4 L77.5 3.3 L77.0 3.4 L76.5 3.8 L76.0 3.6 L75.5 5.6 L75.0 5.8 L74.5 6.1 L74.0 7.5 L73.5 33.4 L73.0 29.8 L72.5 5.9 L72.0 2.5 L71.5 0.6 L71.0 0.8 L70.5 1.1 L70.0 1.0 L69.5 1.5 L69.0 0.6 L68.5 0.6 L68.0 18.1 L67.5 16.7 L67.0 0.9 L66.5 1.1 L66.0 0.6 L65.5 0.6 L65.0 0.7 L64.5 0.8 L64.0 0.8 L63.5 1.2 L63.0 1.0 L62.5 30.7 L62.0 33.1 L61.5 3.3 L61.0 3.6 L60.5 0.6 L60.0 0.6 L59.5 0.7 L59.0 0.7 L58.5 0.9 L58.0 17.4 L57.5 22.7 L57.0 0.8 L56.5 1.2 L56.0 0.6 L55.5 0.6 L55.0 0.6 L54.5 1.0 L54.0 1.2 L53.5 1.7 L53.0 2.9 L52.5 36.0 L52.0 41.8 L51.5 2.3 L51.0 2.6 L50.5 0.6 L50.0 8.9 L49.5 8.0 L49.0 1.7 L48.5 1.1 L48.0 0.6 L47.5 0.6 L47.0 7.9 L46.5 8.2 L46.0 1.8 L45.5 1.9 L45.0 0.6 L44.5 0.6 L44.0 11.4 L43.5 13.0 L43.0 1.2 L42.5 1.3 L42.0 1.6 L41.5 21.4 L41.0 27.6 L40.5 2.3 L40.0 1.5 L39.5 0.6 L39.0 0.6 L38.5 1.1 L38.0 0.9 L37.5 1.0 L37.0 1.2 L36.5 9.6 L36.0 13.1 L35.5 3.0 L35.0 3.0 L34.5 0.6 L34.0 10.6 L33.5 12.2 L33.0 1.6 L32.5 1.2 L32.0 2.5 L31.5 40.3 L31.0 33.3 L30.5 5.7 L30.0 4.5 L29.5 0.6 L29.0 0.6 L28.5 5.7 L28.0 4.4 L27.5 0.8 L27.0 0.8 L26.5 1.1 L26.0 10.2 L25.5 12.5 L25.0 2.1 L24.5 2.1 L24.0 0.6 L23.5 12.0 L23.0 8.7 L22.5 1.6 L22.0 2.0 L21.5 2.6 L21.0 27.4 L20.5 31.6 L20.0 3.4 L19.5 3.9 L19.0 0.6 L18.5 0.6 L18.0 11.9 L17.5 11.4 L17.0 1.6 L16.5 2.4 L16.0 9.5 L15.5 8.2 L15.0 2.7 L14.5 2.4 L14.0 1.8 L13.5 1.7 L13.0 2.5 L12.5 2.8 L12.0 3.3 L11.5 3.4 L11.0 34.0 L10.5 36.6 L10.0 4.5 L9.5 5.2 L9.0 3.6 L8.5 2.9 L8.0 11.5 L7.5 11.2 L7.0 4.0 L6.5 5.1 L6.0 4.5 L5.5 7.4 L5.0 8.5 L4.5 4.6 L4.0 6.3 L3.5 5.0 L3.0 7.9 L2.5 9.5 L2.0 9.4 L1.5 7.4 L1.0 10.8 L0.5 5.8 L0.0 27.6Z"/></g></svg>
 <div class="t" style="left:5px;top:3.500px;color:#fff;font-size:10px;letter-spacing:-0.096px">FunkSmash Kit_bip_1</div>
 <svg class="a" style="left:107px;top:4px" width="13" height="9" viewBox="0 0 13 9" fill="none" stroke="#fff" stroke-width=".9"><circle cx="4.200" cy="4.500" r="3"/><circle cx="8.200" cy="4.500" r="3"/></svg>
</div>
<div class="a" style="left:304.300px;top:260.800px;width:506px;height:40.600px;background:#1ea230;border-radius:3px 0 0 3px;overflow:hidden">
 <div class="t" style="left:5px;top:3.500px;font-size:10px;color:#fff">Instr 1</div>
 <svg class="a" style="left:0;top:35.200px" width="506" height="1"><path d="M2 .5h504" stroke="#d4f6d4" stroke-width="1" stroke-dasharray="3 4.800 3 5 3 2.300 3 9.100 3 5 3 4.600 3 2.300 3 4.800 3 9.200"/></svg>
</div>
<!-- right strip -->
<div class="a" style="left:810px;top:32.500px;width:16px;height:705px;background:#3e3e3e"></div>
<div class="a" style="left:809.500px;top:66px;width:16px;height:1px;background:#2e2e2e"></div>
<!-- bottom scrollbar -->
<div class="a" style="left:0;top:724px;width:825px;height:13px;background:#3a3a3a"></div>
<div class="a" style="left:295.400px;top:724px;width:1.200px;height:13px;background:#303030"></div>
<div class="a" style="left:298px;top:727px;width:46.800px;height:7px;border-radius:3.500px;background:#767676"></div>
<!-- playhead -->
<div class="a" style="left:303px;top:52px;width:1.200px;height:672px;background:#ececec"></div>
<svg class="a" style="left:296.700px;top:49.400px" width="14.400" height="14.600" viewBox="0 0 14.400 14.600"><path d="M2.500 0h9.400a2.500 2.500 0 0 1 2.500 2.500v4.300l-7.200 7.800-7.200-7.800v-4.300a2.500 2.500 0 0 1 2.500-2.500z" fill="#b4b4b4" fill-opacity=".92"/><path d="M6.900 2.500v12.100" stroke="#f4f4f4" stroke-width="1.200"/></svg>
</div>
<div id="dlg" class="a">
<div class="a" style="left:0;top:0;width:554px;height:16.500px;background:#fafafa;border-radius:7px 7px 0 0;border-bottom:1px solid #dcdcdc"></div>
<div class="t" style="left:0;width:554px;text-align:center;top:2px;color:#2a2a2a;font-size:10.3px;letter-spacing:-0.028px">Remplacement/Doublement de la batterie</div>
<!-- instrument -->
<div class="t" style="right:375.500px;top:36px;font-size:11.8px;letter-spacing:0.042px">Instrument :</div>
<div class="a" style="left:188px;top:33.500px;width:238px;height:17.500px;background:#fff;border-radius:5px;box-shadow:0 0 0 .5px rgba(0,0,0,.12),0 .5px 1.200px rgba(0,0,0,.22)"></div>
<div class="t" style="left:195px;top:36px;font-size:11.8px;letter-spacing:0.027px">Kick</div>
<div class="a" style="left:410.5px;top:34.8px;width:14px;height:14px;border-radius:4px;background:linear-gradient(#3d8bfd,#1b6ff2)"></div>
<svg class="a" style="left:410.5px;top:34.8px" width="14" height="14" viewBox="0 0 14 14" fill="none" stroke="#fff" stroke-width="1.300" stroke-linecap="round" stroke-linejoin="round"><path d="M4.600 5.600l2.400-2.400 2.400 2.400M4.600 8.400l2.400 2.400 2.400-2.400"/></svg>
<!-- mode -->
<div class="t" style="right:375.500px;top:66px;font-size:11.8px;letter-spacing:-0.046px">Mode :</div>
<div class="a" style="left:187.500px;top:66px;width:12.500px;height:12.500px;border-radius:7px;background:#1a78f5"></div>
<div class="a" style="left:191.200px;top:69.700px;width:5.200px;height:5.200px;border-radius:3px;background:#fff"></div>
<div class="t" style="left:205px;top:66px;font-size:11.8px;letter-spacing:-0.138px">Remplacement</div>
<div class="a" style="left:187.500px;top:84px;width:12.500px;height:12.500px;border-radius:7px;background:#fff;box-shadow:0 0 0 .5px rgba(0,0,0,.22),inset 0 .5px 1px rgba(0,0,0,.12)"></div>
<div class="t" style="left:205px;top:84px;font-size:11.8px;letter-spacing:0.007px">Doublement</div>
<!-- seuil -->
<div class="t" style="right:375.500px;top:110px;font-size:11.8px;letter-spacing:-0.022px">Seuil relatif :</div>
<div class="a" style="left:189px;top:116.200px;width:232px;height:3.600px;background:#e3e3e3;border-radius:1.500px"></div>
<div class="a" style="left:189px;top:114.5px;width:1.500px;height:7.500px;background:#d2d2d2"></div><div class="a" style="left:218px;top:114.5px;width:1.500px;height:7.500px;background:#d2d2d2"></div><div class="a" style="left:247px;top:114.5px;width:1.500px;height:7.500px;background:#d2d2d2"></div><div class="a" style="left:276px;top:114.5px;width:1.500px;height:7.500px;background:#d2d2d2"></div><div class="a" style="left:305px;top:114.5px;width:1.500px;height:7.500px;background:#d2d2d2"></div><div class="a" style="left:334px;top:114.5px;width:1.500px;height:7.500px;background:#d2d2d2"></div><div class="a" style="left:363px;top:114.5px;width:1.500px;height:7.500px;background:#d2d2d2"></div><div class="a" style="left:392px;top:114.5px;width:1.500px;height:7.500px;background:#d2d2d2"></div><div class="a" style="left:421px;top:114.5px;width:1.500px;height:7.500px;background:#d2d2d2"></div>
<div class="a" style="left:346.500px;top:109px;width:7.500px;height:18.500px;border-radius:3.500px;background:#fff;box-shadow:0 0 0 .5px rgba(0,0,0,.2),0 1px 2px rgba(0,0,0,.3)"></div>
<div class="a" style="left:426.400px;top:106px;width:94.700px;height:22.600px;border-radius:7px;background:#7ea6f2"></div>
<div class="a" style="left:429.400px;top:109.300px;width:88.700px;height:16px;border-radius:4px;background:#fff"></div>
<div class="a" style="left:458px;top:110px;width:32px;height:14.500px;background:#b2d1fc"></div>
<div class="t" style="left:459px;top:111.500px;color:#1a1a1a;font-size:11.8px;letter-spacing:0.421px">-12,0</div>
<svg class="a" style="left:430px;top:109.500px" width="88" height="16" viewBox="0 0 88 16" fill="none" stroke="#777" stroke-width="1"><path d="M3.500 6l3.300 3.300 3.300-3.300M76 9.500l3.300-3.300 3.300 3.300"/></svg>
<div class="t" style="left:522.500px;top:111px;font-size:11.8px;letter-spacing:-0.467px">dB</div>
<div class="t" style="left:188px;top:140px;font-size:11.8px;letter-spacing:-0.164px">Les notes de déclenchement seront générées pour les éléments</div>
<div class="t" style="left:188px;top:154px;font-size:11.8px;letter-spacing:-0.162px">transitoires dont la valeur est supérieure à la valeur désignée.</div>
<div class="a" style="left:188px;top:175px;width:55px;height:17px;background:#fff;border-radius:5px;box-shadow:0 0 0 .5px rgba(0,0,0,.12),0 .5px 1.200px rgba(0,0,0,.22);text-align:center;line-height:16.500px;font-size:11.8px;letter-spacing:-0.065px">Aperçu</div>
<!-- note -->
<div class="t" style="right:375.500px;top:212px;font-size:11.8px;letter-spacing:0.026px">Note de déclenchement :</div>
<div class="a" style="left:188px;top:209.500px;width:150px;height:17.500px;background:#fff;border-radius:5px;box-shadow:0 0 0 .5px rgba(0,0,0,.12),0 .5px 1.200px rgba(0,0,0,.22)"></div>
<div class="t" style="left:195px;top:212px;font-size:11.8px;letter-spacing:-0.169px">Auto</div>
<div class="a" style="left:322px;top:210.8px;width:14px;height:14px;border-radius:4px;background:linear-gradient(#3d8bfd,#1b6ff2)"></div>
<svg class="a" style="left:322px;top:210.8px" width="14" height="14" viewBox="0 0 14 14" fill="none" stroke="#fff" stroke-width="1.300" stroke-linecap="round" stroke-linejoin="round"><path d="M4.600 5.600l2.400-2.400 2.400 2.400M4.600 8.400l2.400 2.400 2.400-2.400"/></svg>
<!-- decalage -->
<div class="t" style="right:375.500px;top:243.900px;font-size:11.8px;letter-spacing:-0.034px">Décalage de synchronisation :</div>
<div class="a" style="left:189px;top:248.200px;width:232px;height:3.600px;background:#e3e3e3;border-radius:1.500px"></div>
<div class="a" style="left:189px;top:246.5px;width:1.500px;height:7.500px;background:#d2d2d2"></div><div class="a" style="left:218px;top:246.5px;width:1.500px;height:7.500px;background:#d2d2d2"></div><div class="a" style="left:247px;top:246.5px;width:1.500px;height:7.500px;background:#d2d2d2"></div><div class="a" style="left:276px;top:246.5px;width:1.500px;height:7.500px;background:#d2d2d2"></div><div class="a" style="left:305px;top:246.5px;width:1.500px;height:7.500px;background:#d2d2d2"></div><div class="a" style="left:334px;top:246.5px;width:1.500px;height:7.500px;background:#d2d2d2"></div><div class="a" style="left:363px;top:246.5px;width:1.500px;height:7.500px;background:#d2d2d2"></div><div class="a" style="left:392px;top:246.5px;width:1.500px;height:7.500px;background:#d2d2d2"></div><div class="a" style="left:421px;top:246.5px;width:1.500px;height:7.500px;background:#d2d2d2"></div>
<div class="a" style="left:357px;top:241px;width:7.500px;height:18.500px;border-radius:3.500px;background:#fff;box-shadow:0 0 0 .5px rgba(0,0,0,.2),0 1px 2px rgba(0,0,0,.3)"></div>
<div class="a" style="left:428px;top:241.500px;width:89px;height:17px;background:#fff;border-radius:5px;box-shadow:0 0 0 .5px rgba(0,0,0,.12),0 .5px 1.200px rgba(0,0,0,.22)"></div>
<div class="t" style="left:448px;width:33px;text-align:right;top:243.200px;font-size:11.8px;letter-spacing:0.065px">0,0</div>
<svg class="a" style="left:429px;top:242px" width="88" height="16" viewBox="0 0 88 16" fill="none" stroke="#777" stroke-width="1"><path d="M3.500 6l3.300 3.300 3.300-3.300M76 9.500l3.300-3.300 3.300 3.300"/></svg>
<div class="t" style="left:521px;top:243.200px;font-size:11.8px;letter-spacing:-0.465px">ms</div>
<div class="a" style="left:188px;top:278px;width:202px;height:17.500px;background:#fff;border-radius:5px;box-shadow:0 0 0 .5px rgba(0,0,0,.12),0 .5px 1.200px rgba(0,0,0,.22);text-align:center;line-height:18.2px;font-size:11.8px;letter-spacing:0.001px">Définir la durée d’attaque moyenne</div>
<div class="a" style="left:418px;top:330px;width:54px;height:17px;background:#fff;border-radius:5px;box-shadow:0 0 0 .5px rgba(0,0,0,.12),0 .5px 1.200px rgba(0,0,0,.22);text-align:center;line-height:16.500px;font-size:11.8px;letter-spacing:-0.010px">Annuler</div>
<div class="a" style="left:482px;top:330px;width:54.500px;height:17px;border-radius:5px;background:linear-gradient(#2d89ff,#0a70f5);color:#fff;-webkit-text-stroke:0;text-align:center;line-height:16.500px;box-shadow:0 .5px 1.500px rgba(0,0,0,.3);font-size:11.8px;letter-spacing:-0.874px">OK</div>
</div>
<div class="a" style="left:0;top:0;width:1px;height:814px;background:rgba(255,255,255,.13)"></div>
</div></div>
<div class="a" style="left:1304px;top:0;width:2px;height:814px;background:#000"></div>
</body></html>
